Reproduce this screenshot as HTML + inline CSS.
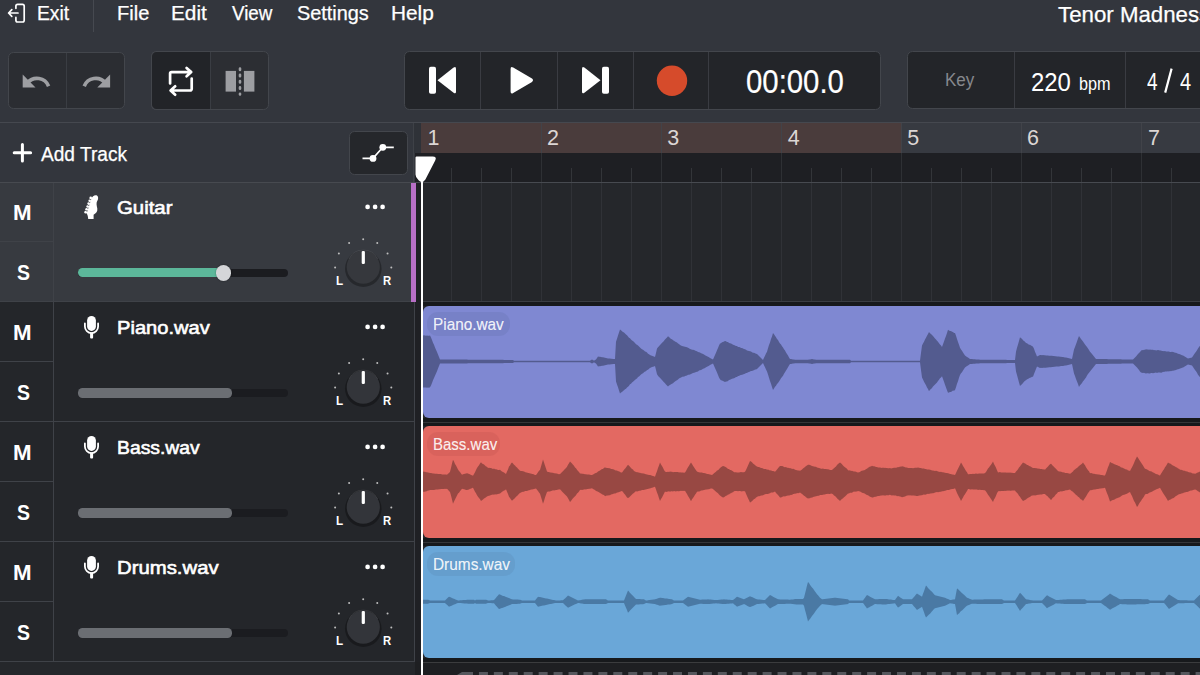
<!DOCTYPE html><html><head><meta charset="utf-8"><style>html,body{margin:0;padding:0;}body{width:1200px;height:675px;overflow:hidden;position:relative;background:#33363d;font-family:"Liberation Sans",sans-serif;}</style></head><body><svg style="position:absolute;left:0;top:0" width="40" height="30" viewBox="0 0 40 30"><path d="M15.9 8.3 V6.1 a1.7 1.7 0 0 1 1.7 -1.7 H22.5 a1.7 1.7 0 0 1 1.7 1.7 V20.3 a1.7 1.7 0 0 1 -1.7 1.7 H17.6 a1.7 1.7 0 0 1 -1.7 -1.7 V17.4" fill="none" stroke="#fff" stroke-width="1.7" stroke-linecap="round"/><path d="M18 13 H8.6 M11.8 9.7 L8.6 13 L11.8 16.3" fill="none" stroke="#fff" stroke-width="1.7" stroke-linecap="round" stroke-linejoin="round"/></svg><div style="position:absolute;left:36.96px;top:2.73px;font-size:20.40px;line-height:20.40px;font-weight:400;color:#fff;white-space:nowrap;transform:scaleX(0.9463);transform-origin:0 0;-webkit-text-stroke:0.25px #fff;">Exit</div><div style="position:absolute;left:93px;top:0px;width:1px;height:32px;background:#464950;"></div><div style="position:absolute;left:116.79px;top:2.53px;font-size:20.40px;line-height:20.40px;font-weight:400;color:#fff;white-space:nowrap;transform:scaleX(0.9837);transform-origin:0 0;-webkit-text-stroke:0.25px #fff;">File</div><div style="position:absolute;left:171.34px;top:2.53px;font-size:20.40px;line-height:20.40px;font-weight:400;color:#fff;white-space:nowrap;transform:scaleX(1.0194);transform-origin:0 0;-webkit-text-stroke:0.25px #fff;">Edit</div><div style="position:absolute;left:231.61px;top:2.53px;font-size:20.40px;line-height:20.40px;font-weight:400;color:#fff;white-space:nowrap;transform:scaleX(0.9210);transform-origin:0 0;-webkit-text-stroke:0.25px #fff;">View</div><div style="position:absolute;left:296.61px;top:2.53px;font-size:20.40px;line-height:20.40px;font-weight:400;color:#fff;white-space:nowrap;transform:scaleX(0.9735);transform-origin:0 0;-webkit-text-stroke:0.25px #fff;">Settings</div><div style="position:absolute;left:390.93px;top:2.53px;font-size:20.40px;line-height:20.40px;font-weight:400;color:#fff;white-space:nowrap;transform:scaleX(1.0209);transform-origin:0 0;-webkit-text-stroke:0.25px #fff;">Help</div><div style="position:absolute;left:1058.25px;top:3.40px;font-size:22.80px;line-height:22.80px;font-weight:400;color:#fff;white-space:nowrap;transform:scaleX(0.9768);transform-origin:0 0;-webkit-text-stroke:0.25px #fff;">Tenor Madness</div><div style="position:absolute;left:8px;top:52px;width:117px;height:57px;background:#2b2d32;border:1.5px solid #43464c;border-radius:5.5px;box-sizing:border-box;overflow:hidden"></div><div style="position:absolute;left:66px;top:53px;width:1px;height:55px;background:#3a3d43;"></div><svg style="position:absolute;left:0;top:40" width="140" height="70" viewBox="0 40 140 70"><path d="M27.5 82.8 A12.5 12.5 0 0 1 48.6 86.2" fill="none" stroke="#9d9ea2" stroke-width="3.6" stroke-linecap="butt"/><path d="M22.7 74.6 L22.7 87.4 L35.5 87.4 Z" fill="#9d9ea2"/><path d="M105.3 82.8 A12.5 12.5 0 0 0 84.2 86.2" fill="none" stroke="#9d9ea2" stroke-width="3.6" stroke-linecap="butt"/><path d="M110.1 74.6 L110.1 87.4 L97.3 87.4 Z" fill="#9d9ea2"/></svg><div style="position:absolute;left:151px;top:51px;width:118px;height:59px;background:#2c2e33;border:1.5px solid #43464c;border-radius:5.5px;box-sizing:border-box;overflow:hidden"></div><div style="position:absolute;left:151px;top:51px;width:60px;height:59px;background:#222428;border:1.5px solid #43464c;border-right:none;border-radius:5.5px 0 0 5.5px;box-sizing:border-box"></div><div style="position:absolute;left:210px;top:52px;width:1px;height:57px;background:#3a3d43;"></div><svg style="position:absolute;left:140;top:40px;left:140px" width="140" height="80" viewBox="140 40 140 80"><path d="M170.1 83.4 V73.6 a1.5 1.5 0 0 1 1.5 -1.5 H191 M186.6 67.9 L191.2 72.1 L186.6 76.3" fill="none" stroke="#fff" stroke-width="2.7" stroke-linecap="round" stroke-linejoin="round"/><path d="M191.7 78.6 V89 a1.5 1.5 0 0 1 -1.5 1.5 H170.8 M175.2 86.3 L170.6 90.5 L175.2 94.7" fill="none" stroke="#fff" stroke-width="2.7" stroke-linecap="round" stroke-linejoin="round"/><rect x="225.6" y="70.9" width="10.4" height="20.7" fill="#9d9ea2"/><rect x="243.9" y="70.9" width="10.5" height="20.7" fill="#9d9ea2"/><path d="M240 68.5 V94.5" stroke="#9d9ea2" stroke-width="2.6" stroke-dasharray="1.4 4.9" stroke-linecap="round"/></svg><div style="position:absolute;left:404px;top:51px;width:477px;height:59px;background:#232529;border:1.5px solid #43464c;border-radius:5.5px;box-sizing:border-box;overflow:hidden"></div><div style="position:absolute;left:480px;top:52px;width:1px;height:57px;background:#3a3c42;"></div><div style="position:absolute;left:557px;top:52px;width:1px;height:57px;background:#3a3c42;"></div><div style="position:absolute;left:633px;top:52px;width:1px;height:57px;background:#3a3c42;"></div><div style="position:absolute;left:708px;top:52px;width:1px;height:57px;background:#3a3c42;"></div><svg style="position:absolute;left:400px;top:40px" width="300" height="80" viewBox="400 40 300 80"><rect x="429" y="66.7" width="7" height="27" rx="1.8" fill="#fff"/><path d="M437.5 80.2 L453.6 67.6 Q456 66 456 69 V91.5 Q456 94.4 453.6 92.8 Z" fill="#fff"/><path d="M510.6 69 Q510.6 66 513.2 67.6 L532 78.6 Q534 80.3 532 82 L513.2 93.1 Q510.6 94.6 510.6 91.6 Z" fill="#fff"/><path d="M600.5 80.2 L584.4 67.6 Q582 66 582 69 V91.5 Q582 94.4 584.4 92.8 Z" fill="#fff"/><rect x="602" y="66.7" width="7" height="27" rx="1.8" fill="#fff"/><circle cx="672" cy="80.8" r="15.2" fill="#d64b2b"/></svg><div style="position:absolute;left:746.13px;top:65.36px;font-size:33.60px;line-height:33.60px;font-weight:400;color:#fff;white-space:nowrap;transform:scaleX(0.8737);transform-origin:0 0;-webkit-text-stroke:0.2px #fff;">00:00.0</div><div style="position:absolute;left:907px;top:51px;width:320px;height:58px;background:#232529;border:1.5px solid #43464c;border-radius:5.5px;box-sizing:border-box;overflow:hidden"></div><div style="position:absolute;left:1014px;top:52px;width:1px;height:56px;background:#3a3c42;"></div><div style="position:absolute;left:1125px;top:52px;width:1px;height:56px;background:#3a3c42;"></div><div style="position:absolute;left:945.44px;top:70.89px;font-size:18.80px;line-height:18.80px;font-weight:400;color:#86888d;white-space:nowrap;transform:scaleX(0.9054);transform-origin:0 0;">Key</div><div style="position:absolute;left:1030.50px;top:68.78px;font-size:26.60px;line-height:26.60px;font-weight:400;color:#fff;white-space:nowrap;transform:scaleX(0.8994);transform-origin:0 0;">220</div><div style="position:absolute;left:1078.94px;top:75.85px;font-size:17.60px;line-height:17.60px;font-weight:400;color:#fff;white-space:nowrap;transform:scaleX(0.9235);transform-origin:0 0;">bpm</div><div style="position:absolute;left:1146.52px;top:69.93px;font-size:24.30px;line-height:24.30px;font-weight:400;color:#fff;white-space:nowrap;transform:scaleX(0.7823);transform-origin:0 0;">4</div><div style="position:absolute;left:1179.60px;top:69.93px;font-size:24.30px;line-height:24.30px;font-weight:400;color:#fff;white-space:nowrap;transform:scaleX(0.8230);transform-origin:0 0;">4</div><svg style="position:absolute;left:1155px;top:62px" width="20" height="36" viewBox="1155 62 20 36"><path d="M1165.2 92.6 L1171.6 68.6" stroke="#fff" stroke-width="2.2"/></svg><div style="position:absolute;left:0px;top:122px;width:1200px;height:1px;background:#45484f;"></div><svg style="position:absolute;left:0;top:130px" width="40" height="40" viewBox="0 130 40 40"><path d="M22.4 144.5 V161 M14.2 152.8 H30.6" stroke="#fff" stroke-width="3" stroke-linecap="round"/></svg><div style="position:absolute;left:40.60px;top:143.99px;font-size:20.10px;line-height:20.10px;font-weight:400;color:#fff;white-space:nowrap;transform:scaleX(0.9508);transform-origin:0 0;-webkit-text-stroke:0.25px #fff;">Add Track</div><div style="position:absolute;left:349px;top:131px;width:59px;height:44px;background:#25272b;border:1.5px solid #43464c;border-radius:5.5px;box-sizing:border-box"></div><svg style="position:absolute;left:350px;top:135px" width="60" height="40" viewBox="350 135 60 40"><path d="M362.5 158.4 H373 L382.8 147.3 H393.8" fill="none" stroke="#fff" stroke-width="1.7"/><circle cx="373" cy="158.4" r="3.4" fill="#fff"/><circle cx="382.8" cy="147.3" r="3.4" fill="#fff"/></svg><div style="position:absolute;left:421px;top:123px;width:779px;height:30px;background:#373a41;"></div><div style="position:absolute;left:421px;top:123px;width:481px;height:30px;background:#4a3c3c;"></div><div style="position:absolute;left:414px;top:123px;width:7px;height:30px;background:#2f3238;"></div><div style="position:absolute;left:413px;top:123px;width:1px;height:59px;background:#3e4147;"></div><div style="position:absolute;left:415px;top:153px;width:785px;height:29px;background:#1e1f23;"></div><svg style="position:absolute;left:0;top:0" width="1200" height="675"><line x1="451.5" y1="168" x2="451.5" y2="182" stroke="#333539" stroke-width="1"/><line x1="481.5" y1="168" x2="481.5" y2="182" stroke="#333539" stroke-width="1"/><line x1="511.5" y1="168" x2="511.5" y2="182" stroke="#333539" stroke-width="1"/><line x1="541.5" y1="123" x2="541.5" y2="153" stroke="#414349" stroke-width="1"/><line x1="541.5" y1="153" x2="541.5" y2="182" stroke="#2e3034" stroke-width="1"/><line x1="571.5" y1="168" x2="571.5" y2="182" stroke="#333539" stroke-width="1"/><line x1="601.5" y1="168" x2="601.5" y2="182" stroke="#333539" stroke-width="1"/><line x1="631.5" y1="168" x2="631.5" y2="182" stroke="#333539" stroke-width="1"/><line x1="661.5" y1="123" x2="661.5" y2="153" stroke="#414349" stroke-width="1"/><line x1="661.5" y1="153" x2="661.5" y2="182" stroke="#2e3034" stroke-width="1"/><line x1="691.5" y1="168" x2="691.5" y2="182" stroke="#333539" stroke-width="1"/><line x1="721.5" y1="168" x2="721.5" y2="182" stroke="#333539" stroke-width="1"/><line x1="751.5" y1="168" x2="751.5" y2="182" stroke="#333539" stroke-width="1"/><line x1="781.5" y1="123" x2="781.5" y2="153" stroke="#414349" stroke-width="1"/><line x1="781.5" y1="153" x2="781.5" y2="182" stroke="#2e3034" stroke-width="1"/><line x1="811.5" y1="168" x2="811.5" y2="182" stroke="#333539" stroke-width="1"/><line x1="841.5" y1="168" x2="841.5" y2="182" stroke="#333539" stroke-width="1"/><line x1="871.5" y1="168" x2="871.5" y2="182" stroke="#333539" stroke-width="1"/><line x1="901.5" y1="123" x2="901.5" y2="153" stroke="#414349" stroke-width="1"/><line x1="901.5" y1="153" x2="901.5" y2="182" stroke="#2e3034" stroke-width="1"/><line x1="931.5" y1="168" x2="931.5" y2="182" stroke="#333539" stroke-width="1"/><line x1="961.5" y1="168" x2="961.5" y2="182" stroke="#333539" stroke-width="1"/><line x1="991.5" y1="168" x2="991.5" y2="182" stroke="#333539" stroke-width="1"/><line x1="1021.5" y1="123" x2="1021.5" y2="153" stroke="#414349" stroke-width="1"/><line x1="1021.5" y1="153" x2="1021.5" y2="182" stroke="#2e3034" stroke-width="1"/><line x1="1051.5" y1="168" x2="1051.5" y2="182" stroke="#333539" stroke-width="1"/><line x1="1081.5" y1="168" x2="1081.5" y2="182" stroke="#333539" stroke-width="1"/><line x1="1111.5" y1="168" x2="1111.5" y2="182" stroke="#333539" stroke-width="1"/><line x1="1141.5" y1="123" x2="1141.5" y2="153" stroke="#414349" stroke-width="1"/><line x1="1141.5" y1="153" x2="1141.5" y2="182" stroke="#2e3034" stroke-width="1"/><line x1="1171.5" y1="168" x2="1171.5" y2="182" stroke="#333539" stroke-width="1"/><line x1="1201.5" y1="168" x2="1201.5" y2="182" stroke="#333539" stroke-width="1"/></svg><div style="position:absolute;left:427.39px;top:128.20px;font-size:21.50px;line-height:21.50px;font-weight:400;color:#dcd6d4;white-space:nowrap;">1</div><div style="position:absolute;left:547.12px;top:128.20px;font-size:21.50px;line-height:21.50px;font-weight:400;color:#dcd6d4;white-space:nowrap;">2</div><div style="position:absolute;left:667.34px;top:128.20px;font-size:21.50px;line-height:21.50px;font-weight:400;color:#dcd6d4;white-space:nowrap;">3</div><div style="position:absolute;left:787.77px;top:128.20px;font-size:21.50px;line-height:21.50px;font-weight:400;color:#dcd6d4;white-space:nowrap;">4</div><div style="position:absolute;left:907.34px;top:128.20px;font-size:21.50px;line-height:21.50px;font-weight:400;color:#dcd6d4;white-space:nowrap;">5</div><div style="position:absolute;left:1027.12px;top:128.20px;font-size:21.50px;line-height:21.50px;font-weight:400;color:#dcd6d4;white-space:nowrap;">6</div><div style="position:absolute;left:1147.92px;top:128.20px;font-size:21.50px;line-height:21.50px;font-weight:400;color:#dcd6d4;white-space:nowrap;">7</div><div style="position:absolute;left:421px;top:182px;width:779px;height:493px;background:#25272b;"></div><div style="position:absolute;left:415px;top:182px;width:6px;height:493px;background:#1f2024;"></div><svg style="position:absolute;left:0;top:0" width="1200" height="675"><line x1="421.5" y1="182" x2="421.5" y2="675" stroke="#303237" stroke-width="1"/><line x1="451.5" y1="182" x2="451.5" y2="675" stroke="#303237" stroke-width="1"/><line x1="481.5" y1="182" x2="481.5" y2="675" stroke="#303237" stroke-width="1"/><line x1="511.5" y1="182" x2="511.5" y2="675" stroke="#303237" stroke-width="1"/><line x1="541.5" y1="182" x2="541.5" y2="675" stroke="#303237" stroke-width="1"/><line x1="571.5" y1="182" x2="571.5" y2="675" stroke="#303237" stroke-width="1"/><line x1="601.5" y1="182" x2="601.5" y2="675" stroke="#303237" stroke-width="1"/><line x1="631.5" y1="182" x2="631.5" y2="675" stroke="#303237" stroke-width="1"/><line x1="661.5" y1="182" x2="661.5" y2="675" stroke="#303237" stroke-width="1"/><line x1="691.5" y1="182" x2="691.5" y2="675" stroke="#303237" stroke-width="1"/><line x1="721.5" y1="182" x2="721.5" y2="675" stroke="#303237" stroke-width="1"/><line x1="751.5" y1="182" x2="751.5" y2="675" stroke="#303237" stroke-width="1"/><line x1="781.5" y1="182" x2="781.5" y2="675" stroke="#303237" stroke-width="1"/><line x1="811.5" y1="182" x2="811.5" y2="675" stroke="#303237" stroke-width="1"/><line x1="841.5" y1="182" x2="841.5" y2="675" stroke="#303237" stroke-width="1"/><line x1="871.5" y1="182" x2="871.5" y2="675" stroke="#303237" stroke-width="1"/><line x1="901.5" y1="182" x2="901.5" y2="675" stroke="#303237" stroke-width="1"/><line x1="931.5" y1="182" x2="931.5" y2="675" stroke="#303237" stroke-width="1"/><line x1="961.5" y1="182" x2="961.5" y2="675" stroke="#303237" stroke-width="1"/><line x1="991.5" y1="182" x2="991.5" y2="675" stroke="#303237" stroke-width="1"/><line x1="1021.5" y1="182" x2="1021.5" y2="675" stroke="#303237" stroke-width="1"/><line x1="1051.5" y1="182" x2="1051.5" y2="675" stroke="#303237" stroke-width="1"/><line x1="1081.5" y1="182" x2="1081.5" y2="675" stroke="#303237" stroke-width="1"/><line x1="1111.5" y1="182" x2="1111.5" y2="675" stroke="#303237" stroke-width="1"/><line x1="1141.5" y1="182" x2="1141.5" y2="675" stroke="#303237" stroke-width="1"/><line x1="1171.5" y1="182" x2="1171.5" y2="675" stroke="#303237" stroke-width="1"/><line x1="1201.5" y1="182" x2="1201.5" y2="675" stroke="#303237" stroke-width="1"/></svg><div style="position:absolute;left:421px;top:301px;width:779px;height:1px;background:#3f4248;"></div><div style="position:absolute;left:421px;top:421px;width:779px;height:1px;background:#3f4248;"></div><div style="position:absolute;left:421px;top:541px;width:779px;height:1px;background:#3f4248;"></div><div style="position:absolute;left:421px;top:661px;width:779px;height:1px;background:#3f4248;"></div><div style="position:absolute;left:0px;top:182px;width:414px;height:120px;background:#373a40;"></div><div style="position:absolute;left:0px;top:241px;width:53px;height:1px;background:#3f4248;"></div><div style="position:absolute;left:53px;top:182px;width:1px;height:120px;background:#3f4248;"></div><div style="position:absolute;left:0px;top:301px;width:415px;height:1px;background:#3f4248;"></div><div style="position:absolute;left:13.45px;top:201.85px;font-size:21.80px;line-height:21.80px;font-weight:700;color:#fff;white-space:nowrap;transform:scaleX(1.0223);transform-origin:0 0;">M</div><div style="position:absolute;left:17.02px;top:261.51px;font-size:22.20px;line-height:22.20px;font-weight:700;color:#fff;white-space:nowrap;transform:scaleX(0.8784);transform-origin:0 0;">S</div><div style="position:absolute;left:117.38px;top:198.56px;font-size:18.60px;line-height:18.60px;font-weight:400;color:#fff;white-space:nowrap;transform:scaleX(1.0955);transform-origin:0 0;-webkit-text-stroke:0.6px #fff;">Guitar</div><svg style="position:absolute;left:76px;top:188px" width="28" height="36" viewBox="76 188 28 36"><path d="M91.2 199.2 C92.2 196 94.6 194.8 96.5 195.3 C98.6 196 98.6 199.3 97 201.5 C96.2 203 96.6 205.5 97.3 208.5 C97.8 211.5 96 213.2 93.6 214.8 L93.6 219 L88.2 219 C88 216.5 87.6 215 86.6 213.6 Z" fill="#fff"/><circle cx="90.70" cy="197.90" r="1.3" fill="#fff"/><path d="M90.70 197.90 L92.20 198.60" stroke="#fff" stroke-width="1"/><circle cx="89.68" cy="200.75" r="1.3" fill="#fff"/><path d="M89.68 200.75 L91.18 201.45" stroke="#fff" stroke-width="1"/><circle cx="88.66" cy="203.60" r="1.3" fill="#fff"/><path d="M88.66 203.60 L90.16 204.30" stroke="#fff" stroke-width="1"/><circle cx="87.64" cy="206.45" r="1.3" fill="#fff"/><path d="M87.64 206.45 L89.14 207.15" stroke="#fff" stroke-width="1"/><circle cx="86.62" cy="209.30" r="1.3" fill="#fff"/><path d="M86.62 209.30 L88.12 210.00" stroke="#fff" stroke-width="1"/><circle cx="85.60" cy="212.15" r="1.3" fill="#fff"/><path d="M85.60 212.15 L87.10 212.85" stroke="#fff" stroke-width="1"/></svg><svg style="position:absolute;left:360px;top:202px" width="30" height="10" viewBox="360 202 30 10"><circle cx="367.6" cy="206.9" r="2.35" fill="#fff"/><circle cx="375.1" cy="206.9" r="2.35" fill="#fff"/><circle cx="382.6" cy="206.9" r="2.35" fill="#fff"/></svg><div style="position:absolute;left:78px;top:268.5px;width:210px;height:8.5px;background:#1b1c20;border-radius:4.25px;"></div><div style="position:absolute;left:78px;top:268.3px;width:146px;height:9px;background:#5cb79a;border-radius:4.5px;"></div><div style="position:absolute;left:215.7px;top:265.2px;width:15.5px;height:15.5px;border-radius:50%;background:#d5d6d9;box-shadow:0 0 2px rgba(0,0,0,.4)"></div><svg style="position:absolute;left:320px;top:227px" width="80" height="70" viewBox="320 227 80 70"><circle cx="363.3" cy="268.70000000000005" r="18.3" fill="rgba(0,0,0,0.3)"/><circle cx="363.3" cy="267.1" r="16.6" fill="#36383d"/><path d="M348.8 259.1 A16.2 16.2 0 0 1 377.8 259.1" fill="none" stroke="rgba(255,255,255,0.09)" stroke-width="0.9"/><rect x="361.7" y="250.90000000000003" width="3.2" height="13" rx="1.2" fill="#fff"/><circle cx="335.10" cy="267.60" r="1.0" fill="#bdbdbd"/><circle cx="338.86" cy="253.40" r="1.0" fill="#bdbdbd"/><circle cx="349.15" cy="243.00" r="1.0" fill="#bdbdbd"/><circle cx="363.20" cy="239.20" r="1.0" fill="#bdbdbd"/><circle cx="377.25" cy="243.00" r="1.0" fill="#bdbdbd"/><circle cx="387.54" cy="253.40" r="1.0" fill="#bdbdbd"/><circle cx="391.30" cy="267.60" r="1.0" fill="#bdbdbd"/></svg><div style="position:absolute;left:336.14px;top:274.73px;font-size:12.60px;line-height:12.60px;font-weight:700;color:#fff;white-space:nowrap;transform:scaleX(0.9246);transform-origin:0 0;">L</div><div style="position:absolute;left:383.26px;top:274.73px;font-size:12.60px;line-height:12.60px;font-weight:700;color:#fff;white-space:nowrap;transform:scaleX(0.8999);transform-origin:0 0;">R</div><div style="position:absolute;left:0px;top:302px;width:414px;height:120px;background:#24262a;"></div><div style="position:absolute;left:0px;top:361px;width:53px;height:1px;background:#3f4248;"></div><div style="position:absolute;left:53px;top:302px;width:1px;height:120px;background:#3f4248;"></div><div style="position:absolute;left:0px;top:421px;width:415px;height:1px;background:#3f4248;"></div><div style="position:absolute;left:13.45px;top:321.85px;font-size:21.80px;line-height:21.80px;font-weight:700;color:#fff;white-space:nowrap;transform:scaleX(1.0223);transform-origin:0 0;">M</div><div style="position:absolute;left:17.02px;top:381.51px;font-size:22.20px;line-height:22.20px;font-weight:700;color:#fff;white-space:nowrap;transform:scaleX(0.8784);transform-origin:0 0;">S</div><div style="position:absolute;left:116.79px;top:318.56px;font-size:18.60px;line-height:18.60px;font-weight:400;color:#fff;white-space:nowrap;transform:scaleX(1.0812);transform-origin:0 0;-webkit-text-stroke:0.6px #fff;">Piano.wav</div><svg style="position:absolute;left:76px;top:310px" width="28" height="36" viewBox="76 310 28 36"><rect x="87.1" y="316.0" width="8.8" height="14.9" rx="4.4" fill="#fff"/><path d="M84.9 323.5 V326.5 A6.6 6.6 0 0 0 98.1 326.5 V323.5" fill="none" stroke="#fff" stroke-width="1.8" stroke-linecap="round"/><rect x="90.1" y="332.5" width="3" height="6" rx="1" fill="#fff"/></svg><svg style="position:absolute;left:360px;top:322px" width="30" height="10" viewBox="360 322 30 10"><circle cx="367.6" cy="326.9" r="2.35" fill="#fff"/><circle cx="375.1" cy="326.9" r="2.35" fill="#fff"/><circle cx="382.6" cy="326.9" r="2.35" fill="#fff"/></svg><div style="position:absolute;left:78px;top:388.5px;width:210px;height:8.5px;background:#1b1c20;border-radius:4.25px;"></div><div style="position:absolute;left:77.6px;top:388.4px;width:154.8px;height:9.2px;background:#6b6e73;border-radius:4.6px;"></div><svg style="position:absolute;left:320px;top:347px" width="80" height="70" viewBox="320 347 80 70"><circle cx="363.3" cy="388.70000000000005" r="18.3" fill="rgba(0,0,0,0.3)"/><circle cx="363.3" cy="387.1" r="16.6" fill="#33353a"/><path d="M348.8 379.1 A16.2 16.2 0 0 1 377.8 379.1" fill="none" stroke="rgba(255,255,255,0.09)" stroke-width="0.9"/><rect x="361.7" y="370.90000000000003" width="3.2" height="13" rx="1.2" fill="#fff"/><circle cx="335.10" cy="387.60" r="1.0" fill="#bdbdbd"/><circle cx="338.86" cy="373.40" r="1.0" fill="#bdbdbd"/><circle cx="349.15" cy="363.00" r="1.0" fill="#bdbdbd"/><circle cx="363.20" cy="359.20" r="1.0" fill="#bdbdbd"/><circle cx="377.25" cy="363.00" r="1.0" fill="#bdbdbd"/><circle cx="387.54" cy="373.40" r="1.0" fill="#bdbdbd"/><circle cx="391.30" cy="387.60" r="1.0" fill="#bdbdbd"/></svg><div style="position:absolute;left:336.14px;top:394.73px;font-size:12.60px;line-height:12.60px;font-weight:700;color:#fff;white-space:nowrap;transform:scaleX(0.9246);transform-origin:0 0;">L</div><div style="position:absolute;left:383.26px;top:394.73px;font-size:12.60px;line-height:12.60px;font-weight:700;color:#fff;white-space:nowrap;transform:scaleX(0.8999);transform-origin:0 0;">R</div><div style="position:absolute;left:0px;top:422px;width:414px;height:120px;background:#24262a;"></div><div style="position:absolute;left:0px;top:481px;width:53px;height:1px;background:#3f4248;"></div><div style="position:absolute;left:53px;top:422px;width:1px;height:120px;background:#3f4248;"></div><div style="position:absolute;left:0px;top:541px;width:415px;height:1px;background:#3f4248;"></div><div style="position:absolute;left:13.45px;top:441.85px;font-size:21.80px;line-height:21.80px;font-weight:700;color:#fff;white-space:nowrap;transform:scaleX(1.0223);transform-origin:0 0;">M</div><div style="position:absolute;left:17.02px;top:501.51px;font-size:22.20px;line-height:22.20px;font-weight:700;color:#fff;white-space:nowrap;transform:scaleX(0.8784);transform-origin:0 0;">S</div><div style="position:absolute;left:116.85px;top:438.56px;font-size:18.60px;line-height:18.60px;font-weight:400;color:#fff;white-space:nowrap;transform:scaleX(1.0394);transform-origin:0 0;-webkit-text-stroke:0.6px #fff;">Bass.wav</div><svg style="position:absolute;left:76px;top:430px" width="28" height="36" viewBox="76 430 28 36"><rect x="87.1" y="436.0" width="8.8" height="14.9" rx="4.4" fill="#fff"/><path d="M84.9 443.5 V446.5 A6.6 6.6 0 0 0 98.1 446.5 V443.5" fill="none" stroke="#fff" stroke-width="1.8" stroke-linecap="round"/><rect x="90.1" y="452.5" width="3" height="6" rx="1" fill="#fff"/></svg><svg style="position:absolute;left:360px;top:442px" width="30" height="10" viewBox="360 442 30 10"><circle cx="367.6" cy="446.9" r="2.35" fill="#fff"/><circle cx="375.1" cy="446.9" r="2.35" fill="#fff"/><circle cx="382.6" cy="446.9" r="2.35" fill="#fff"/></svg><div style="position:absolute;left:78px;top:508.5px;width:210px;height:8.5px;background:#1b1c20;border-radius:4.25px;"></div><div style="position:absolute;left:77.6px;top:508.4px;width:154.8px;height:9.2px;background:#6b6e73;border-radius:4.6px;"></div><svg style="position:absolute;left:320px;top:467px" width="80" height="70" viewBox="320 467 80 70"><circle cx="363.3" cy="508.70000000000005" r="18.3" fill="rgba(0,0,0,0.3)"/><circle cx="363.3" cy="507.1" r="16.6" fill="#33353a"/><path d="M348.8 499.1 A16.2 16.2 0 0 1 377.8 499.1" fill="none" stroke="rgba(255,255,255,0.09)" stroke-width="0.9"/><rect x="361.7" y="490.90000000000003" width="3.2" height="13" rx="1.2" fill="#fff"/><circle cx="335.10" cy="507.60" r="1.0" fill="#bdbdbd"/><circle cx="338.86" cy="493.40" r="1.0" fill="#bdbdbd"/><circle cx="349.15" cy="483.00" r="1.0" fill="#bdbdbd"/><circle cx="363.20" cy="479.20" r="1.0" fill="#bdbdbd"/><circle cx="377.25" cy="483.00" r="1.0" fill="#bdbdbd"/><circle cx="387.54" cy="493.40" r="1.0" fill="#bdbdbd"/><circle cx="391.30" cy="507.60" r="1.0" fill="#bdbdbd"/></svg><div style="position:absolute;left:336.14px;top:514.73px;font-size:12.60px;line-height:12.60px;font-weight:700;color:#fff;white-space:nowrap;transform:scaleX(0.9246);transform-origin:0 0;">L</div><div style="position:absolute;left:383.26px;top:514.73px;font-size:12.60px;line-height:12.60px;font-weight:700;color:#fff;white-space:nowrap;transform:scaleX(0.8999);transform-origin:0 0;">R</div><div style="position:absolute;left:0px;top:542px;width:414px;height:120px;background:#24262a;"></div><div style="position:absolute;left:0px;top:601px;width:53px;height:1px;background:#3f4248;"></div><div style="position:absolute;left:53px;top:542px;width:1px;height:120px;background:#3f4248;"></div><div style="position:absolute;left:0px;top:661px;width:415px;height:1px;background:#3f4248;"></div><div style="position:absolute;left:13.45px;top:561.85px;font-size:21.80px;line-height:21.80px;font-weight:700;color:#fff;white-space:nowrap;transform:scaleX(1.0223);transform-origin:0 0;">M</div><div style="position:absolute;left:17.02px;top:621.51px;font-size:22.20px;line-height:22.20px;font-weight:700;color:#fff;white-space:nowrap;transform:scaleX(0.8784);transform-origin:0 0;">S</div><div style="position:absolute;left:116.77px;top:558.56px;font-size:18.60px;line-height:18.60px;font-weight:400;color:#fff;white-space:nowrap;transform:scaleX(1.0928);transform-origin:0 0;-webkit-text-stroke:0.6px #fff;">Drums.wav</div><svg style="position:absolute;left:76px;top:550px" width="28" height="36" viewBox="76 550 28 36"><rect x="87.1" y="556.0" width="8.8" height="14.9" rx="4.4" fill="#fff"/><path d="M84.9 563.5 V566.5 A6.6 6.6 0 0 0 98.1 566.5 V563.5" fill="none" stroke="#fff" stroke-width="1.8" stroke-linecap="round"/><rect x="90.1" y="572.5" width="3" height="6" rx="1" fill="#fff"/></svg><svg style="position:absolute;left:360px;top:562px" width="30" height="10" viewBox="360 562 30 10"><circle cx="367.6" cy="566.9" r="2.35" fill="#fff"/><circle cx="375.1" cy="566.9" r="2.35" fill="#fff"/><circle cx="382.6" cy="566.9" r="2.35" fill="#fff"/></svg><div style="position:absolute;left:78px;top:628.5px;width:210px;height:8.5px;background:#1b1c20;border-radius:4.25px;"></div><div style="position:absolute;left:77.6px;top:628.4px;width:154.8px;height:9.2px;background:#6b6e73;border-radius:4.6px;"></div><svg style="position:absolute;left:320px;top:587px" width="80" height="70" viewBox="320 587 80 70"><circle cx="363.3" cy="628.7" r="18.3" fill="rgba(0,0,0,0.3)"/><circle cx="363.3" cy="627.1" r="16.6" fill="#33353a"/><path d="M348.8 619.1 A16.2 16.2 0 0 1 377.8 619.1" fill="none" stroke="rgba(255,255,255,0.09)" stroke-width="0.9"/><rect x="361.7" y="610.9" width="3.2" height="13" rx="1.2" fill="#fff"/><circle cx="335.10" cy="627.60" r="1.0" fill="#bdbdbd"/><circle cx="338.86" cy="613.40" r="1.0" fill="#bdbdbd"/><circle cx="349.15" cy="603.00" r="1.0" fill="#bdbdbd"/><circle cx="363.20" cy="599.20" r="1.0" fill="#bdbdbd"/><circle cx="377.25" cy="603.00" r="1.0" fill="#bdbdbd"/><circle cx="387.54" cy="613.40" r="1.0" fill="#bdbdbd"/><circle cx="391.30" cy="627.60" r="1.0" fill="#bdbdbd"/></svg><div style="position:absolute;left:336.14px;top:634.73px;font-size:12.60px;line-height:12.60px;font-weight:700;color:#fff;white-space:nowrap;transform:scaleX(0.9246);transform-origin:0 0;">L</div><div style="position:absolute;left:383.26px;top:634.73px;font-size:12.60px;line-height:12.60px;font-weight:700;color:#fff;white-space:nowrap;transform:scaleX(0.8999);transform-origin:0 0;">R</div><div style="position:absolute;left:414px;top:182px;width:1px;height:480px;background:#3f4248;"></div><div style="position:absolute;left:411px;top:183px;width:4.5px;height:118.5px;background:#b86fc6;"></div><div style="position:absolute;left:0px;top:181.5px;width:1200px;height:1.3px;background:#474a50;"></div><div style="position:absolute;left:0px;top:662px;width:415px;height:13px;background:#25272b;"></div><div style="position:absolute;left:415px;top:662px;width:785px;height:13px;background:#1e1f22;"></div><div style="position:absolute;left:421px;top:302px;width:779px;height:4px;background:#17191c;"></div><div style="position:absolute;left:421px;top:418px;width:779px;height:8px;background:#17191c;"></div><div style="position:absolute;left:421px;top:538px;width:779px;height:8px;background:#17191c;"></div><div style="position:absolute;left:421px;top:658px;width:779px;height:4px;background:#17191c;"></div><div style="position:absolute;left:421px;top:421.5px;width:779px;height:1px;background:rgba(255,255,255,0.13);"></div><div style="position:absolute;left:421px;top:541.5px;width:779px;height:1px;background:rgba(255,255,255,0.13);"></div><div style="position:absolute;left:421px;top:661.5px;width:779px;height:1px;background:rgba(255,255,255,0.13);"></div><div style="position:absolute;left:421px;top:301px;width:779px;height:1px;background:#3a3d43;"></div><div style="position:absolute;left:423px;top:306px;width:790px;height:112px;background:#7f88d2;border-radius:6px;overflow:hidden"><svg style="position:absolute;left:-423px;top:-306px" width="1213" height="675"><path d="M423.0 335.5 L424.0 335.2 L425.0 335.5 L426.0 335.7 L427.0 335.4 L428.0 335.7 L429.0 335.7 L430.0 335.4 L431.0 337.5 L432.0 340.1 L433.0 342.7 L434.0 344.8 L435.0 347.4 L436.0 349.8 L437.0 352.0 L438.0 354.5 L439.0 357.0 L440.0 359.5 L441.0 359.5 L442.0 359.5 L443.0 359.5 L444.0 359.5 L445.0 359.5 L446.0 359.5 L447.0 359.5 L448.0 359.5 L449.0 359.5 L450.0 359.6 L451.0 359.6 L452.0 359.6 L453.0 359.6 L454.0 359.6 L455.0 359.6 L456.0 359.6 L457.0 359.6 L458.0 359.6 L459.0 359.6 L460.0 359.6 L461.0 359.6 L462.0 359.6 L463.0 359.6 L464.0 359.6 L465.0 359.6 L466.0 359.6 L467.0 359.6 L468.0 359.7 L469.0 359.7 L470.0 359.7 L471.0 359.7 L472.0 359.7 L473.0 359.7 L474.0 359.7 L475.0 359.7 L476.0 359.7 L477.0 359.7 L478.0 359.7 L479.0 359.7 L480.0 359.7 L481.0 359.7 L482.0 359.7 L483.0 359.7 L484.0 359.7 L485.0 359.7 L486.0 359.8 L487.0 359.8 L488.0 359.8 L489.0 359.8 L490.0 359.8 L491.0 359.8 L492.0 359.8 L493.0 359.8 L494.0 359.8 L495.0 359.8 L496.0 359.8 L497.0 359.8 L498.0 359.8 L499.0 359.8 L500.0 359.8 L501.0 359.8 L502.0 359.8 L503.0 359.8 L504.0 359.9 L505.0 359.9 L506.0 359.9 L507.0 359.9 L508.0 359.9 L509.0 359.9 L510.0 359.9 L511.0 359.9 L512.0 359.9 L513.0 359.9 L514.0 360.7 L515.0 360.7 L516.0 360.7 L517.0 360.7 L518.0 360.7 L519.0 360.7 L520.0 360.7 L521.0 360.7 L522.0 360.7 L523.0 360.7 L524.0 360.7 L525.0 360.7 L526.0 360.7 L527.0 360.7 L528.0 360.7 L529.0 360.7 L530.0 360.7 L531.0 360.7 L532.0 360.7 L533.0 360.7 L534.0 360.7 L535.0 360.7 L536.0 360.7 L537.0 360.7 L538.0 360.7 L539.0 360.7 L540.0 360.7 L541.0 360.7 L542.0 360.7 L543.0 360.7 L544.0 360.7 L545.0 360.7 L546.0 360.7 L547.0 360.7 L548.0 360.7 L549.0 360.7 L550.0 360.7 L551.0 360.7 L552.0 360.7 L553.0 360.7 L554.0 360.7 L555.0 360.7 L556.0 360.7 L557.0 360.7 L558.0 360.7 L559.0 360.7 L560.0 360.7 L561.0 360.7 L562.0 360.7 L563.0 360.7 L564.0 360.7 L565.0 360.7 L566.0 360.7 L567.0 360.7 L568.0 360.7 L569.0 360.7 L570.0 360.7 L571.0 360.7 L572.0 360.7 L573.0 360.7 L574.0 360.7 L575.0 360.7 L576.0 360.7 L577.0 360.7 L578.0 360.7 L579.0 360.7 L580.0 360.7 L581.0 360.7 L582.0 360.7 L583.0 360.7 L584.0 360.7 L585.0 360.7 L586.0 360.7 L587.0 360.7 L588.0 360.7 L589.0 360.7 L590.0 360.7 L591.0 360.1 L592.0 359.5 L593.0 360.1 L594.0 360.7 L595.0 360.1 L596.0 359.5 L597.0 358.0 L598.0 356.5 L599.0 356.7 L600.0 356.8 L601.0 357.0 L602.0 357.2 L603.0 357.3 L604.0 357.5 L605.0 357.8 L606.0 358.0 L607.0 358.2 L608.0 358.5 L609.0 358.6 L610.0 358.6 L611.0 358.7 L612.0 358.8 L613.0 358.9 L614.0 358.9 L615.0 359.0 L616.0 341.7 L617.0 338.7 L618.0 335.6 L619.0 332.5 L620.0 329.6 L621.0 330.3 L622.0 331.3 L623.0 331.9 L624.0 332.6 L625.0 333.5 L626.0 334.4 L627.0 335.3 L628.0 336.6 L629.0 337.7 L630.0 338.3 L631.0 339.6 L632.0 340.4 L633.0 341.0 L634.0 341.9 L635.0 343.1 L636.0 344.2 L637.0 344.7 L638.0 345.4 L639.0 346.6 L640.0 347.5 L641.0 348.4 L642.0 349.2 L643.0 349.7 L644.0 350.5 L645.0 351.4 L646.0 351.8 L647.0 352.5 L648.0 353.7 L649.0 354.3 L650.0 355.0 L651.0 355.4 L652.0 355.8 L653.0 356.2 L654.0 356.6 L655.0 357.0 L656.0 352.9 L657.0 348.5 L658.0 347.2 L659.0 346.2 L660.0 345.1 L661.0 344.1 L662.0 342.8 L663.0 342.1 L664.0 340.7 L665.0 339.6 L666.0 338.4 L667.0 337.5 L668.0 336.3 L669.0 337.1 L670.0 338.0 L671.0 338.9 L672.0 339.3 L673.0 340.2 L674.0 340.7 L675.0 341.4 L676.0 342.1 L677.0 342.6 L678.0 343.5 L679.0 344.0 L680.0 344.9 L681.0 345.5 L682.0 346.0 L683.0 346.2 L684.0 346.6 L685.0 346.8 L686.0 347.0 L687.0 347.3 L688.0 347.8 L689.0 348.3 L690.0 349.0 L691.0 349.3 L692.0 349.7 L693.0 349.8 L694.0 350.0 L695.0 350.6 L696.0 351.1 L697.0 351.3 L698.0 351.9 L699.0 352.2 L700.0 352.6 L701.0 353.2 L702.0 353.6 L703.0 354.0 L704.0 354.5 L705.0 355.3 L706.0 355.7 L707.0 356.2 L708.0 356.8 L709.0 357.3 L710.0 357.9 L711.0 358.4 L712.0 359.0 L713.0 359.5 L714.0 357.2 L715.0 354.9 L716.0 352.7 L717.0 350.3 L718.0 347.9 L719.0 345.5 L720.0 343.4 L721.0 343.2 L722.0 342.3 L723.0 342.1 L724.0 341.4 L725.0 340.9 L726.0 341.3 L727.0 342.0 L728.0 342.1 L729.0 343.0 L730.0 343.3 L731.0 343.5 L732.0 344.0 L733.0 344.7 L734.0 344.9 L735.0 345.4 L736.0 345.9 L737.0 346.1 L738.0 346.9 L739.0 346.9 L740.0 347.3 L741.0 347.9 L742.0 348.1 L743.0 348.6 L744.0 349.1 L745.0 349.3 L746.0 349.8 L747.0 350.4 L748.0 350.8 L749.0 350.9 L750.0 351.2 L751.0 351.5 L752.0 352.2 L753.0 352.7 L754.0 352.7 L755.0 353.3 L756.0 353.7 L757.0 354.0 L758.0 354.9 L759.0 355.9 L760.0 356.9 L761.0 357.9 L762.0 358.9 L763.0 359.9 L764.0 357.8 L765.0 355.7 L766.0 353.6 L767.0 351.7 L768.0 348.2 L769.0 345.1 L770.0 342.4 L771.0 338.9 L772.0 336.4 L773.0 333.0 L774.0 334.2 L775.0 335.7 L776.0 337.3 L777.0 339.0 L778.0 340.1 L779.0 341.9 L780.0 343.4 L781.0 344.5 L782.0 346.2 L783.0 347.5 L784.0 349.2 L785.0 350.5 L786.0 352.4 L787.0 354.0 L788.0 355.6 L789.0 357.4 L790.0 359.0 L791.0 359.1 L792.0 359.3 L793.0 359.4 L794.0 359.6 L795.0 359.7 L796.0 359.7 L797.0 359.7 L798.0 359.7 L799.0 359.7 L800.0 359.7 L801.0 359.7 L802.0 359.7 L803.0 359.7 L804.0 359.7 L805.0 359.7 L806.0 359.7 L807.0 359.7 L808.0 359.7 L809.0 359.5 L810.0 359.4 L811.0 359.2 L812.0 359.0 L813.0 359.2 L814.0 359.4 L815.0 359.5 L816.0 359.7 L817.0 359.7 L818.0 359.7 L819.0 359.7 L820.0 359.7 L821.0 359.7 L822.0 359.7 L823.0 359.7 L824.0 359.7 L825.0 359.7 L826.0 359.7 L827.0 359.7 L828.0 359.7 L829.0 359.7 L830.0 359.7 L831.0 359.7 L832.0 359.7 L833.0 359.7 L834.0 359.7 L835.0 359.7 L836.0 359.7 L837.0 359.7 L838.0 359.7 L839.0 359.7 L840.0 359.7 L841.0 359.7 L842.0 359.7 L843.0 359.7 L844.0 359.7 L845.0 359.7 L846.0 359.7 L847.0 359.7 L848.0 359.7 L849.0 359.7 L850.0 359.7 L851.0 360.7 L852.0 360.7 L853.0 360.7 L854.0 360.7 L855.0 360.7 L856.0 360.7 L857.0 360.7 L858.0 360.7 L859.0 360.7 L860.0 360.7 L861.0 360.7 L862.0 360.7 L863.0 360.7 L864.0 360.7 L865.0 360.7 L866.0 360.7 L867.0 360.7 L868.0 360.7 L869.0 360.7 L870.0 360.7 L871.0 360.7 L872.0 360.7 L873.0 360.7 L874.0 360.7 L875.0 360.7 L876.0 360.7 L877.0 360.7 L878.0 360.7 L879.0 360.7 L880.0 360.7 L881.0 360.7 L882.0 360.7 L883.0 360.7 L884.0 360.7 L885.0 360.7 L886.0 360.7 L887.0 360.7 L888.0 360.7 L889.0 360.7 L890.0 360.7 L891.0 360.7 L892.0 360.7 L893.0 360.7 L894.0 360.7 L895.0 360.7 L896.0 360.7 L897.0 360.7 L898.0 360.7 L899.0 360.7 L900.0 360.7 L901.0 360.7 L902.0 360.7 L903.0 360.7 L904.0 360.7 L905.0 360.7 L906.0 360.7 L907.0 360.7 L908.0 360.7 L909.0 360.7 L910.0 360.7 L911.0 360.7 L912.0 360.7 L913.0 360.7 L914.0 360.7 L915.0 360.7 L916.0 360.7 L917.0 360.7 L918.0 360.7 L919.0 360.7 L920.0 360.7 L921.0 353.1 L922.0 345.4 L923.0 343.4 L924.0 341.7 L925.0 339.5 L926.0 337.8 L927.0 335.8 L928.0 333.9 L929.0 332.0 L930.0 333.2 L931.0 334.0 L932.0 335.0 L933.0 336.1 L934.0 337.3 L935.0 338.6 L936.0 339.4 L937.0 340.8 L938.0 341.8 L939.0 343.2 L940.0 344.6 L941.0 345.5 L942.0 346.9 L943.0 344.2 L944.0 341.5 L945.0 338.5 L946.0 335.9 L947.0 333.1 L948.0 329.7 L949.0 330.6 L950.0 331.0 L951.0 331.0 L952.0 331.8 L953.0 332.1 L954.0 332.9 L955.0 333.1 L956.0 335.7 L957.0 339.0 L958.0 342.1 L959.0 344.8 L960.0 347.8 L961.0 349.5 L962.0 350.8 L963.0 352.6 L964.0 354.1 L965.0 355.6 L966.0 356.2 L967.0 356.9 L968.0 357.6 L969.0 358.3 L970.0 359.0 L971.0 359.1 L972.0 359.1 L973.0 359.2 L974.0 359.2 L975.0 359.3 L976.0 359.4 L977.0 359.5 L978.0 359.5 L979.0 359.6 L980.0 359.7 L981.0 359.7 L982.0 359.7 L983.0 359.7 L984.0 359.7 L985.0 359.7 L986.0 359.7 L987.0 359.7 L988.0 359.7 L989.0 359.8 L990.0 359.8 L991.0 359.8 L992.0 359.8 L993.0 359.8 L994.0 359.8 L995.0 359.8 L996.0 359.8 L997.0 359.8 L998.0 359.8 L999.0 359.8 L1000.0 359.8 L1001.0 359.8 L1002.0 359.8 L1003.0 359.8 L1004.0 359.8 L1005.0 359.8 L1006.0 359.8 L1007.0 359.9 L1008.0 359.9 L1009.0 359.9 L1010.0 359.9 L1011.0 359.9 L1012.0 359.9 L1013.0 359.9 L1014.0 359.9 L1015.0 359.9 L1016.0 351.8 L1017.0 347.8 L1018.0 344.4 L1019.0 340.9 L1020.0 337.2 L1021.0 338.2 L1022.0 338.8 L1023.0 340.3 L1024.0 341.1 L1025.0 341.7 L1026.0 343.0 L1027.0 343.2 L1028.0 344.0 L1029.0 344.8 L1030.0 344.8 L1031.0 345.6 L1032.0 346.0 L1033.0 346.8 L1034.0 348.8 L1035.0 351.7 L1036.0 354.0 L1037.0 356.5 L1038.0 356.0 L1039.0 355.4 L1040.0 355.1 L1041.0 355.0 L1042.0 355.2 L1043.0 355.1 L1044.0 355.2 L1045.0 355.3 L1046.0 355.4 L1047.0 355.5 L1048.0 355.6 L1049.0 355.7 L1050.0 355.8 L1051.0 355.8 L1052.0 355.8 L1053.0 355.9 L1054.0 356.1 L1055.0 356.2 L1056.0 356.3 L1057.0 356.4 L1058.0 356.5 L1059.0 356.6 L1060.0 356.8 L1061.0 356.8 L1062.0 357.0 L1063.0 357.1 L1064.0 357.3 L1065.0 357.4 L1066.0 357.5 L1067.0 357.8 L1068.0 358.0 L1069.0 358.2 L1070.0 358.5 L1071.0 358.8 L1072.0 359.0 L1073.0 354.2 L1074.0 349.4 L1075.0 347.0 L1076.0 344.2 L1077.0 341.5 L1078.0 338.5 L1079.0 336.1 L1080.0 337.6 L1081.0 339.1 L1082.0 340.2 L1083.0 341.4 L1084.0 342.9 L1085.0 344.6 L1086.0 345.8 L1087.0 347.1 L1088.0 348.6 L1089.0 350.1 L1090.0 351.8 L1091.0 352.8 L1092.0 354.1 L1093.0 355.3 L1094.0 356.5 L1095.0 357.8 L1096.0 359.0 L1097.0 359.0 L1098.0 359.0 L1099.0 359.0 L1100.0 359.1 L1101.0 359.1 L1102.0 359.1 L1103.0 359.1 L1104.0 359.1 L1105.0 359.1 L1106.0 359.1 L1107.0 359.1 L1108.0 359.2 L1109.0 359.2 L1110.0 359.2 L1111.0 359.2 L1112.0 359.2 L1113.0 359.2 L1114.0 359.2 L1115.0 359.3 L1116.0 359.3 L1117.0 359.3 L1118.0 359.3 L1119.0 359.3 L1120.0 359.3 L1121.0 359.3 L1122.0 359.4 L1123.0 359.4 L1124.0 359.4 L1125.0 359.4 L1126.0 359.4 L1127.0 359.4 L1128.0 359.4 L1129.0 359.4 L1130.0 359.5 L1131.0 359.5 L1132.0 359.5 L1133.0 359.5 L1134.0 358.5 L1135.0 357.5 L1136.0 356.5 L1137.0 355.3 L1138.0 354.1 L1139.0 353.1 L1140.0 351.9 L1141.0 350.7 L1142.0 350.1 L1143.0 350.3 L1144.0 349.7 L1145.0 349.8 L1146.0 349.3 L1147.0 349.4 L1148.0 349.5 L1149.0 349.8 L1150.0 349.6 L1151.0 349.8 L1152.0 349.8 L1153.0 349.8 L1154.0 350.3 L1155.0 350.0 L1156.0 350.4 L1157.0 350.2 L1158.0 350.1 L1159.0 350.3 L1160.0 350.4 L1161.0 350.4 L1162.0 351.0 L1163.0 351.1 L1164.0 351.2 L1165.0 350.9 L1166.0 351.4 L1167.0 351.4 L1168.0 351.6 L1169.0 351.5 L1170.0 352.0 L1171.0 351.9 L1172.0 351.8 L1173.0 352.1 L1174.0 352.2 L1175.0 352.7 L1176.0 352.7 L1177.0 353.3 L1178.0 353.7 L1179.0 354.0 L1180.0 354.3 L1181.0 354.8 L1182.0 355.2 L1183.0 355.6 L1184.0 356.0 L1185.0 356.7 L1186.0 357.3 L1187.0 357.9 L1188.0 358.5 L1189.0 358.2 L1190.0 358.0 L1191.0 357.8 L1192.0 357.5 L1193.0 355.9 L1194.0 354.5 L1195.0 352.9 L1196.0 351.8 L1197.0 350.2 L1198.0 348.6 L1199.0 347.1 L1200.0 345.8 L1200.0 377.3 L1199.0 376.0 L1198.0 374.7 L1197.0 372.7 L1196.0 371.3 L1195.0 369.9 L1194.0 368.6 L1193.0 367.1 L1192.0 365.5 L1191.0 365.2 L1190.0 365.0 L1189.0 364.8 L1188.0 364.5 L1187.0 365.1 L1186.0 365.7 L1185.0 366.3 L1184.0 366.9 L1183.0 367.4 L1182.0 367.8 L1181.0 368.2 L1180.0 368.6 L1179.0 368.9 L1178.0 369.2 L1177.0 369.6 L1176.0 370.0 L1175.0 370.3 L1174.0 370.5 L1173.0 370.8 L1172.0 370.8 L1171.0 371.2 L1170.0 371.1 L1169.0 371.5 L1168.0 371.3 L1167.0 371.6 L1166.0 371.4 L1165.0 371.6 L1164.0 372.1 L1163.0 371.8 L1162.0 372.4 L1161.0 372.7 L1160.0 372.4 L1159.0 372.5 L1158.0 372.4 L1157.0 373.0 L1156.0 372.5 L1155.0 372.7 L1154.0 372.9 L1153.0 373.2 L1152.0 373.1 L1151.0 373.1 L1150.0 373.4 L1149.0 373.4 L1148.0 373.3 L1147.0 373.3 L1146.0 373.4 L1145.0 373.3 L1144.0 372.8 L1143.0 373.1 L1142.0 372.7 L1141.0 372.5 L1140.0 371.4 L1139.0 369.9 L1138.0 368.8 L1137.0 367.6 L1136.0 366.5 L1135.0 365.5 L1134.0 364.5 L1133.0 363.5 L1132.0 363.5 L1131.0 363.5 L1130.0 363.5 L1129.0 363.6 L1128.0 363.6 L1127.0 363.6 L1126.0 363.6 L1125.0 363.6 L1124.0 363.6 L1123.0 363.6 L1122.0 363.6 L1121.0 363.7 L1120.0 363.7 L1119.0 363.7 L1118.0 363.7 L1117.0 363.7 L1116.0 363.7 L1115.0 363.7 L1114.0 363.8 L1113.0 363.8 L1112.0 363.8 L1111.0 363.8 L1110.0 363.8 L1109.0 363.8 L1108.0 363.8 L1107.0 363.9 L1106.0 363.9 L1105.0 363.9 L1104.0 363.9 L1103.0 363.9 L1102.0 363.9 L1101.0 363.9 L1100.0 363.9 L1099.0 364.0 L1098.0 364.0 L1097.0 364.0 L1096.0 364.0 L1095.0 365.2 L1094.0 366.5 L1093.0 367.7 L1092.0 368.9 L1091.0 370.2 L1090.0 371.4 L1089.0 372.8 L1088.0 374.1 L1087.0 375.6 L1086.0 377.4 L1085.0 378.7 L1084.0 380.2 L1083.0 381.2 L1082.0 383.0 L1081.0 384.3 L1080.0 385.3 L1079.0 386.9 L1078.0 384.1 L1077.0 381.5 L1076.0 379.0 L1075.0 376.0 L1074.0 373.6 L1073.0 368.7 L1072.0 364.0 L1071.0 364.2 L1070.0 364.5 L1069.0 364.8 L1068.0 365.0 L1067.0 365.2 L1066.0 365.5 L1065.0 365.6 L1064.0 365.7 L1063.0 365.9 L1062.0 366.0 L1061.0 366.1 L1060.0 366.2 L1059.0 366.4 L1058.0 366.5 L1057.0 366.6 L1056.0 366.6 L1055.0 366.8 L1054.0 366.8 L1053.0 367.0 L1052.0 367.1 L1051.0 367.2 L1050.0 367.3 L1049.0 367.3 L1048.0 367.5 L1047.0 367.5 L1046.0 367.7 L1045.0 367.8 L1044.0 367.7 L1043.0 367.8 L1042.0 367.9 L1041.0 367.8 L1040.0 368.0 L1039.0 367.5 L1038.0 367.0 L1037.0 366.5 L1036.0 368.9 L1035.0 371.4 L1034.0 374.1 L1033.0 376.8 L1032.0 376.7 L1031.0 377.4 L1030.0 377.8 L1029.0 378.3 L1028.0 379.1 L1027.0 379.3 L1026.0 380.2 L1025.0 380.7 L1024.0 381.8 L1023.0 382.9 L1022.0 384.2 L1021.0 385.1 L1020.0 385.9 L1019.0 382.6 L1018.0 378.8 L1017.0 375.1 L1016.0 371.4 L1015.0 363.1 L1014.0 363.1 L1013.0 363.1 L1012.0 363.1 L1011.0 363.1 L1010.0 363.1 L1009.0 363.1 L1008.0 363.1 L1007.0 363.1 L1006.0 363.2 L1005.0 363.2 L1004.0 363.2 L1003.0 363.2 L1002.0 363.2 L1001.0 363.2 L1000.0 363.2 L999.0 363.2 L998.0 363.2 L997.0 363.2 L996.0 363.2 L995.0 363.2 L994.0 363.2 L993.0 363.2 L992.0 363.2 L991.0 363.2 L990.0 363.2 L989.0 363.2 L988.0 363.3 L987.0 363.3 L986.0 363.3 L985.0 363.3 L984.0 363.3 L983.0 363.3 L982.0 363.3 L981.0 363.3 L980.0 363.3 L979.0 363.4 L978.0 363.5 L977.0 363.5 L976.0 363.6 L975.0 363.7 L974.0 363.8 L973.0 363.8 L972.0 363.9 L971.0 363.9 L970.0 364.0 L969.0 364.7 L968.0 365.4 L967.0 366.1 L966.0 366.8 L965.0 367.4 L964.0 369.1 L963.0 370.6 L962.0 372.3 L961.0 373.3 L960.0 374.9 L959.0 377.8 L958.0 381.3 L957.0 383.8 L956.0 387.3 L955.0 390.0 L954.0 390.7 L953.0 390.6 L952.0 391.2 L951.0 391.9 L950.0 391.9 L949.0 392.5 L948.0 392.7 L947.0 390.2 L946.0 387.5 L945.0 384.7 L944.0 381.8 L943.0 379.0 L942.0 376.2 L941.0 377.6 L940.0 378.3 L939.0 379.8 L938.0 381.0 L937.0 382.6 L936.0 383.5 L935.0 384.6 L934.0 385.4 L933.0 386.6 L932.0 387.9 L931.0 389.1 L930.0 389.7 L929.0 391.2 L928.0 389.1 L927.0 387.4 L926.0 385.2 L925.0 383.5 L924.0 381.7 L923.0 379.6 L922.0 377.6 L921.0 369.9 L920.0 362.3 L919.0 362.3 L918.0 362.3 L917.0 362.3 L916.0 362.3 L915.0 362.3 L914.0 362.3 L913.0 362.3 L912.0 362.3 L911.0 362.3 L910.0 362.3 L909.0 362.3 L908.0 362.3 L907.0 362.3 L906.0 362.3 L905.0 362.3 L904.0 362.3 L903.0 362.3 L902.0 362.3 L901.0 362.3 L900.0 362.3 L899.0 362.3 L898.0 362.3 L897.0 362.3 L896.0 362.3 L895.0 362.3 L894.0 362.3 L893.0 362.3 L892.0 362.3 L891.0 362.3 L890.0 362.3 L889.0 362.3 L888.0 362.3 L887.0 362.3 L886.0 362.3 L885.0 362.3 L884.0 362.3 L883.0 362.3 L882.0 362.3 L881.0 362.3 L880.0 362.3 L879.0 362.3 L878.0 362.3 L877.0 362.3 L876.0 362.3 L875.0 362.3 L874.0 362.3 L873.0 362.3 L872.0 362.3 L871.0 362.3 L870.0 362.3 L869.0 362.3 L868.0 362.3 L867.0 362.3 L866.0 362.3 L865.0 362.3 L864.0 362.3 L863.0 362.3 L862.0 362.3 L861.0 362.3 L860.0 362.3 L859.0 362.3 L858.0 362.3 L857.0 362.3 L856.0 362.3 L855.0 362.3 L854.0 362.3 L853.0 362.3 L852.0 362.3 L851.0 362.3 L850.0 363.3 L849.0 363.3 L848.0 363.3 L847.0 363.3 L846.0 363.3 L845.0 363.3 L844.0 363.3 L843.0 363.3 L842.0 363.3 L841.0 363.3 L840.0 363.3 L839.0 363.3 L838.0 363.3 L837.0 363.3 L836.0 363.3 L835.0 363.3 L834.0 363.3 L833.0 363.3 L832.0 363.3 L831.0 363.3 L830.0 363.3 L829.0 363.3 L828.0 363.3 L827.0 363.3 L826.0 363.3 L825.0 363.3 L824.0 363.3 L823.0 363.3 L822.0 363.3 L821.0 363.3 L820.0 363.3 L819.0 363.3 L818.0 363.3 L817.0 363.3 L816.0 363.3 L815.0 363.5 L814.0 363.6 L813.0 363.8 L812.0 364.0 L811.0 363.8 L810.0 363.6 L809.0 363.5 L808.0 363.3 L807.0 363.3 L806.0 363.3 L805.0 363.3 L804.0 363.3 L803.0 363.3 L802.0 363.3 L801.0 363.3 L800.0 363.3 L799.0 363.3 L798.0 363.3 L797.0 363.3 L796.0 363.3 L795.0 363.3 L794.0 363.4 L793.0 363.6 L792.0 363.7 L791.0 363.9 L790.0 364.0 L789.0 365.6 L788.0 367.3 L787.0 369.0 L786.0 370.6 L785.0 372.3 L784.0 373.8 L783.0 375.7 L782.0 377.1 L781.0 378.2 L780.0 380.0 L779.0 381.4 L778.0 383.0 L777.0 383.9 L776.0 385.8 L775.0 386.8 L774.0 388.6 L773.0 390.0 L772.0 386.9 L771.0 383.7 L770.0 380.9 L769.0 377.7 L768.0 374.6 L767.0 371.5 L766.0 369.4 L765.0 367.3 L764.0 365.2 L763.0 363.1 L762.0 364.1 L761.0 365.1 L760.0 366.0 L759.0 367.1 L758.0 368.0 L757.0 368.9 L756.0 369.5 L755.0 369.6 L754.0 370.2 L753.0 370.4 L752.0 371.0 L751.0 371.0 L750.0 371.6 L749.0 372.0 L748.0 372.2 L747.0 373.0 L746.0 373.1 L745.0 373.8 L744.0 374.0 L743.0 374.6 L742.0 374.7 L741.0 375.0 L740.0 375.3 L739.0 376.0 L738.0 376.1 L737.0 377.0 L736.0 377.1 L735.0 377.7 L734.0 378.2 L733.0 378.6 L732.0 378.7 L731.0 379.2 L730.0 379.8 L729.0 380.0 L728.0 380.9 L727.0 381.4 L726.0 381.4 L725.0 382.1 L724.0 381.5 L723.0 380.9 L722.0 380.6 L721.0 380.2 L720.0 379.3 L719.0 377.5 L718.0 374.9 L717.0 372.6 L716.0 370.2 L715.0 368.1 L714.0 365.8 L713.0 363.5 L712.0 364.0 L711.0 364.6 L710.0 365.1 L709.0 365.7 L708.0 366.2 L707.0 366.7 L706.0 367.3 L705.0 367.9 L704.0 368.5 L703.0 368.7 L702.0 369.6 L701.0 370.1 L700.0 370.3 L699.0 370.6 L698.0 371.4 L697.0 371.7 L696.0 371.9 L695.0 372.4 L694.0 372.7 L693.0 372.9 L692.0 373.5 L691.0 373.9 L690.0 374.5 L689.0 374.8 L688.0 374.7 L687.0 375.5 L686.0 375.8 L685.0 376.1 L684.0 376.7 L683.0 376.6 L682.0 377.1 L681.0 377.6 L680.0 378.1 L679.0 378.4 L678.0 379.6 L677.0 380.2 L676.0 380.8 L675.0 381.6 L674.0 382.2 L673.0 383.2 L672.0 383.7 L671.0 384.3 L670.0 385.1 L669.0 385.5 L668.0 386.4 L667.0 385.6 L666.0 384.5 L665.0 383.2 L664.0 382.3 L663.0 381.3 L662.0 380.1 L661.0 378.9 L660.0 377.7 L659.0 376.9 L658.0 375.8 L657.0 374.2 L656.0 370.1 L655.0 366.0 L654.0 366.4 L653.0 366.8 L652.0 367.1 L651.0 367.6 L650.0 368.0 L649.0 368.8 L648.0 369.7 L647.0 370.1 L646.0 371.3 L645.0 371.6 L644.0 372.3 L643.0 373.3 L642.0 373.7 L641.0 374.5 L640.0 375.6 L639.0 376.6 L638.0 377.1 L637.0 378.4 L636.0 378.9 L635.0 380.1 L634.0 380.7 L633.0 381.8 L632.0 382.5 L631.0 383.7 L630.0 384.3 L629.0 385.8 L628.0 386.8 L627.0 387.4 L626.0 388.7 L625.0 389.2 L624.0 390.2 L623.0 391.0 L622.0 391.9 L621.0 392.5 L620.0 393.4 L619.0 390.5 L618.0 387.3 L617.0 384.5 L616.0 381.6 L615.0 364.0 L614.0 364.1 L613.0 364.1 L612.0 364.2 L611.0 364.3 L610.0 364.4 L609.0 364.4 L608.0 364.5 L607.0 364.8 L606.0 365.0 L605.0 365.2 L604.0 365.5 L603.0 365.7 L602.0 365.8 L601.0 366.0 L600.0 366.2 L599.0 366.3 L598.0 366.5 L597.0 365.0 L596.0 363.5 L595.0 362.9 L594.0 362.3 L593.0 362.9 L592.0 363.5 L591.0 362.9 L590.0 362.3 L589.0 362.3 L588.0 362.3 L587.0 362.3 L586.0 362.3 L585.0 362.3 L584.0 362.3 L583.0 362.3 L582.0 362.3 L581.0 362.3 L580.0 362.3 L579.0 362.3 L578.0 362.3 L577.0 362.3 L576.0 362.3 L575.0 362.3 L574.0 362.3 L573.0 362.3 L572.0 362.3 L571.0 362.3 L570.0 362.3 L569.0 362.3 L568.0 362.3 L567.0 362.3 L566.0 362.3 L565.0 362.3 L564.0 362.3 L563.0 362.3 L562.0 362.3 L561.0 362.3 L560.0 362.3 L559.0 362.3 L558.0 362.3 L557.0 362.3 L556.0 362.3 L555.0 362.3 L554.0 362.3 L553.0 362.3 L552.0 362.3 L551.0 362.3 L550.0 362.3 L549.0 362.3 L548.0 362.3 L547.0 362.3 L546.0 362.3 L545.0 362.3 L544.0 362.3 L543.0 362.3 L542.0 362.3 L541.0 362.3 L540.0 362.3 L539.0 362.3 L538.0 362.3 L537.0 362.3 L536.0 362.3 L535.0 362.3 L534.0 362.3 L533.0 362.3 L532.0 362.3 L531.0 362.3 L530.0 362.3 L529.0 362.3 L528.0 362.3 L527.0 362.3 L526.0 362.3 L525.0 362.3 L524.0 362.3 L523.0 362.3 L522.0 362.3 L521.0 362.3 L520.0 362.3 L519.0 362.3 L518.0 362.3 L517.0 362.3 L516.0 362.3 L515.0 362.3 L514.0 362.3 L513.0 363.1 L512.0 363.1 L511.0 363.1 L510.0 363.1 L509.0 363.1 L508.0 363.1 L507.0 363.1 L506.0 363.1 L505.0 363.1 L504.0 363.1 L503.0 363.2 L502.0 363.2 L501.0 363.2 L500.0 363.2 L499.0 363.2 L498.0 363.2 L497.0 363.2 L496.0 363.2 L495.0 363.2 L494.0 363.2 L493.0 363.2 L492.0 363.2 L491.0 363.2 L490.0 363.2 L489.0 363.2 L488.0 363.2 L487.0 363.2 L486.0 363.2 L485.0 363.3 L484.0 363.3 L483.0 363.3 L482.0 363.3 L481.0 363.3 L480.0 363.3 L479.0 363.3 L478.0 363.3 L477.0 363.3 L476.0 363.3 L475.0 363.3 L474.0 363.3 L473.0 363.3 L472.0 363.3 L471.0 363.3 L470.0 363.3 L469.0 363.3 L468.0 363.3 L467.0 363.4 L466.0 363.4 L465.0 363.4 L464.0 363.4 L463.0 363.4 L462.0 363.4 L461.0 363.4 L460.0 363.4 L459.0 363.4 L458.0 363.4 L457.0 363.4 L456.0 363.4 L455.0 363.4 L454.0 363.4 L453.0 363.4 L452.0 363.4 L451.0 363.4 L450.0 363.4 L449.0 363.5 L448.0 363.5 L447.0 363.5 L446.0 363.5 L445.0 363.5 L444.0 363.5 L443.0 363.5 L442.0 363.5 L441.0 363.5 L440.0 363.5 L439.0 366.0 L438.0 368.5 L437.0 371.2 L436.0 373.5 L435.0 375.7 L434.0 377.9 L433.0 380.2 L432.0 382.9 L431.0 385.4 L430.0 387.2 L429.0 387.7 L428.0 387.4 L427.0 387.7 L426.0 387.5 L425.0 387.6 L424.0 387.5 L423.0 387.5Z" fill="#535b8f"/></svg><div style="position:absolute;left:4px;top:6px;width:82.5px;height:23.5px;border-radius:11px;background:#7680c6;opacity:.85"></div></div><div style="position:absolute;left:433.27px;top:317.15px;font-size:16.60px;line-height:16.60px;font-weight:400;color:rgba(255,255,255,0.9);white-space:nowrap;transform:scaleX(0.9242);transform-origin:0 0;-webkit-text-stroke:0.15px rgba(255,255,255,0.9);">Piano.wav</div><div style="position:absolute;left:423px;top:426px;width:790px;height:112px;background:#e36962;border-radius:6px;overflow:hidden"><svg style="position:absolute;left:-423px;top:-426px" width="1213" height="675"><path d="M423.0 471.4 L424.0 471.7 L425.0 471.8 L426.0 472.3 L427.0 472.3 L428.0 472.5 L429.0 472.7 L430.0 473.1 L431.0 473.1 L432.0 473.3 L433.0 473.5 L434.0 473.5 L435.0 473.7 L436.0 473.8 L437.0 473.7 L438.0 474.1 L439.0 473.9 L440.0 474.0 L441.0 474.1 L442.0 474.4 L443.0 474.4 L444.0 474.6 L445.0 474.6 L446.0 474.6 L447.0 474.8 L448.0 473.8 L449.0 472.9 L450.0 471.7 L451.0 467.9 L452.0 463.6 L453.0 459.8 L454.0 461.4 L455.0 463.9 L456.0 465.4 L457.0 467.6 L458.0 469.6 L459.0 470.9 L460.0 472.0 L461.0 473.4 L462.0 474.8 L463.0 474.3 L464.0 474.0 L465.0 473.8 L466.0 473.5 L467.0 473.2 L468.0 473.6 L469.0 474.0 L470.0 474.3 L471.0 474.9 L472.0 475.2 L473.0 475.7 L474.0 473.9 L475.0 472.2 L476.0 470.1 L477.0 468.0 L478.0 466.5 L479.0 465.2 L480.0 463.6 L481.0 462.3 L482.0 463.4 L483.0 464.0 L484.0 464.5 L485.0 465.6 L486.0 466.5 L487.0 466.8 L488.0 467.9 L489.0 467.7 L490.0 468.1 L491.0 468.1 L492.0 468.5 L493.0 468.9 L494.0 468.6 L495.0 469.3 L496.0 469.3 L497.0 469.4 L498.0 469.9 L499.0 470.0 L500.0 469.8 L501.0 470.8 L502.0 471.4 L503.0 472.1 L504.0 472.6 L505.0 473.3 L506.0 474.1 L507.0 471.5 L508.0 469.4 L509.0 466.4 L510.0 465.4 L511.0 463.6 L512.0 462.4 L513.0 463.6 L514.0 464.8 L515.0 465.6 L516.0 466.7 L517.0 467.6 L518.0 468.7 L519.0 469.8 L520.0 470.8 L521.0 471.1 L522.0 471.1 L523.0 471.2 L524.0 471.6 L525.0 472.1 L526.0 472.4 L527.0 472.6 L528.0 473.0 L529.0 473.0 L530.0 473.4 L531.0 473.5 L532.0 474.0 L533.0 474.1 L534.0 474.4 L535.0 474.9 L536.0 475.1 L537.0 473.7 L538.0 472.3 L539.0 470.8 L540.0 470.0 L541.0 466.4 L542.0 463.1 L543.0 459.6 L544.0 462.4 L545.0 465.4 L546.0 468.5 L547.0 471.6 L548.0 472.1 L549.0 472.1 L550.0 472.4 L551.0 472.6 L552.0 472.8 L553.0 472.7 L554.0 473.2 L555.0 473.2 L556.0 473.5 L557.0 473.5 L558.0 474.0 L559.0 474.2 L560.0 474.0 L561.0 473.3 L562.0 472.0 L563.0 471.2 L564.0 470.0 L565.0 469.1 L566.0 468.0 L567.0 466.7 L568.0 464.7 L569.0 463.2 L570.0 461.5 L571.0 462.5 L572.0 463.5 L573.0 464.7 L574.0 465.8 L575.0 467.4 L576.0 468.3 L577.0 469.8 L578.0 471.1 L579.0 472.0 L580.0 473.5 L581.0 473.6 L582.0 473.7 L583.0 473.7 L584.0 474.0 L585.0 474.2 L586.0 474.3 L587.0 474.4 L588.0 474.4 L589.0 474.4 L590.0 474.7 L591.0 474.9 L592.0 474.9 L593.0 474.5 L594.0 473.9 L595.0 473.3 L596.0 472.9 L597.0 472.4 L598.0 471.5 L599.0 471.1 L600.0 470.5 L601.0 469.8 L602.0 469.1 L603.0 468.9 L604.0 467.8 L605.0 467.4 L606.0 467.7 L607.0 467.9 L608.0 467.9 L609.0 468.3 L610.0 468.3 L611.0 468.9 L612.0 469.1 L613.0 469.2 L614.0 469.5 L615.0 470.2 L616.0 470.6 L617.0 470.6 L618.0 471.2 L619.0 471.3 L620.0 472.1 L621.0 472.4 L622.0 472.5 L623.0 471.2 L624.0 469.7 L625.0 468.7 L626.0 467.4 L627.0 466.1 L628.0 464.7 L629.0 465.8 L630.0 466.8 L631.0 467.9 L632.0 469.1 L633.0 469.6 L634.0 471.0 L635.0 471.6 L636.0 472.1 L637.0 472.2 L638.0 472.3 L639.0 472.7 L640.0 472.8 L641.0 473.2 L642.0 473.3 L643.0 473.5 L644.0 473.6 L645.0 473.9 L646.0 474.2 L647.0 474.5 L648.0 474.7 L649.0 474.9 L650.0 475.1 L651.0 475.3 L652.0 475.7 L653.0 476.0 L654.0 476.3 L655.0 476.7 L656.0 473.8 L657.0 471.2 L658.0 468.1 L659.0 465.6 L660.0 462.6 L661.0 464.4 L662.0 466.1 L663.0 467.8 L664.0 469.9 L665.0 471.5 L666.0 471.9 L667.0 472.1 L668.0 471.8 L669.0 472.0 L670.0 471.6 L671.0 471.8 L672.0 471.8 L673.0 472.2 L674.0 472.0 L675.0 472.0 L676.0 471.9 L677.0 472.1 L678.0 472.0 L679.0 472.4 L680.0 472.2 L681.0 472.5 L682.0 472.4 L683.0 472.5 L684.0 472.7 L685.0 472.6 L686.0 471.0 L687.0 468.9 L688.0 467.3 L689.0 465.8 L690.0 464.0 L691.0 462.4 L692.0 463.9 L693.0 465.8 L694.0 467.2 L695.0 468.8 L696.0 470.2 L697.0 471.4 L698.0 471.9 L699.0 472.3 L700.0 472.6 L701.0 472.5 L702.0 472.6 L703.0 473.0 L704.0 473.0 L705.0 473.3 L706.0 473.6 L707.0 474.1 L708.0 473.9 L709.0 474.2 L710.0 474.6 L711.0 474.8 L712.0 475.0 L713.0 474.2 L714.0 473.2 L715.0 472.5 L716.0 471.7 L717.0 470.5 L718.0 470.2 L719.0 469.2 L720.0 468.0 L721.0 467.2 L722.0 466.4 L723.0 466.1 L724.0 466.3 L725.0 466.8 L726.0 467.2 L727.0 468.0 L728.0 468.9 L729.0 468.9 L730.0 470.0 L731.0 470.1 L732.0 470.8 L733.0 471.2 L734.0 472.2 L735.0 472.3 L736.0 472.3 L737.0 472.5 L738.0 472.6 L739.0 472.4 L740.0 472.2 L741.0 472.1 L742.0 472.3 L743.0 472.3 L744.0 472.2 L745.0 471.8 L746.0 469.9 L747.0 467.7 L748.0 465.4 L749.0 463.2 L750.0 460.9 L751.0 461.5 L752.0 462.3 L753.0 463.6 L754.0 464.3 L755.0 465.1 L756.0 465.9 L757.0 466.5 L758.0 467.0 L759.0 467.1 L760.0 467.6 L761.0 467.9 L762.0 468.0 L763.0 468.4 L764.0 468.9 L765.0 469.0 L766.0 469.0 L767.0 469.7 L768.0 469.5 L769.0 470.1 L770.0 470.5 L771.0 470.3 L772.0 471.1 L773.0 470.9 L774.0 471.2 L775.0 471.8 L776.0 470.7 L777.0 469.6 L778.0 468.3 L779.0 467.1 L780.0 466.0 L781.0 466.0 L782.0 466.1 L783.0 466.3 L784.0 467.0 L785.0 467.2 L786.0 467.0 L787.0 467.8 L788.0 467.8 L789.0 467.9 L790.0 468.3 L791.0 468.3 L792.0 469.0 L793.0 468.8 L794.0 469.1 L795.0 469.8 L796.0 470.0 L797.0 470.2 L798.0 470.5 L799.0 470.6 L800.0 470.8 L801.0 470.3 L802.0 469.6 L803.0 468.4 L804.0 467.8 L805.0 467.1 L806.0 466.0 L807.0 465.5 L808.0 464.7 L809.0 464.8 L810.0 465.0 L811.0 465.4 L812.0 465.9 L813.0 466.3 L814.0 466.4 L815.0 466.7 L816.0 466.8 L817.0 467.6 L818.0 467.8 L819.0 468.0 L820.0 468.3 L821.0 468.7 L822.0 468.7 L823.0 468.6 L824.0 469.1 L825.0 469.0 L826.0 468.9 L827.0 469.3 L828.0 469.3 L829.0 469.4 L830.0 469.9 L831.0 469.9 L832.0 470.0 L833.0 469.1 L834.0 468.3 L835.0 467.2 L836.0 466.4 L837.0 465.1 L838.0 464.1 L839.0 463.3 L840.0 462.4 L841.0 463.3 L842.0 464.2 L843.0 465.5 L844.0 466.5 L845.0 467.3 L846.0 468.1 L847.0 468.8 L848.0 470.3 L849.0 470.5 L850.0 470.3 L851.0 470.9 L852.0 470.8 L853.0 471.2 L854.0 471.4 L855.0 471.5 L856.0 471.8 L857.0 472.2 L858.0 472.4 L859.0 472.2 L860.0 472.0 L861.0 471.1 L862.0 470.8 L863.0 470.4 L864.0 470.2 L865.0 469.9 L866.0 469.0 L867.0 468.7 L868.0 467.8 L869.0 467.2 L870.0 466.6 L871.0 466.5 L872.0 465.8 L873.0 466.3 L874.0 466.3 L875.0 466.4 L876.0 466.9 L877.0 467.1 L878.0 467.5 L879.0 467.5 L880.0 467.4 L881.0 467.8 L882.0 468.0 L883.0 467.6 L884.0 468.0 L885.0 467.8 L886.0 468.0 L887.0 467.9 L888.0 468.2 L889.0 468.2 L890.0 468.1 L891.0 468.4 L892.0 468.2 L893.0 467.9 L894.0 467.7 L895.0 467.7 L896.0 467.7 L897.0 467.5 L898.0 467.0 L899.0 467.3 L900.0 466.6 L901.0 466.8 L902.0 466.3 L903.0 466.6 L904.0 466.7 L905.0 467.3 L906.0 467.5 L907.0 467.5 L908.0 468.0 L909.0 468.0 L910.0 467.9 L911.0 468.1 L912.0 468.1 L913.0 468.2 L914.0 468.0 L915.0 467.8 L916.0 467.7 L917.0 467.7 L918.0 467.4 L919.0 467.8 L920.0 468.0 L921.0 468.1 L922.0 468.5 L923.0 468.6 L924.0 468.5 L925.0 469.1 L926.0 468.9 L927.0 469.4 L928.0 469.4 L929.0 469.6 L930.0 469.8 L931.0 470.1 L932.0 470.4 L933.0 470.4 L934.0 470.7 L935.0 471.1 L936.0 470.8 L937.0 471.1 L938.0 471.4 L939.0 471.7 L940.0 472.0 L941.0 471.8 L942.0 472.2 L943.0 472.2 L944.0 472.4 L945.0 472.8 L946.0 472.9 L947.0 472.9 L948.0 473.3 L949.0 473.5 L950.0 473.9 L951.0 474.1 L952.0 474.4 L953.0 474.4 L954.0 474.8 L955.0 475.0 L956.0 472.9 L957.0 470.8 L958.0 468.7 L959.0 466.8 L960.0 464.8 L961.0 462.4 L962.0 464.0 L963.0 466.0 L964.0 467.5 L965.0 469.3 L966.0 471.1 L967.0 472.3 L968.0 474.3 L969.0 474.3 L970.0 474.0 L971.0 474.1 L972.0 473.9 L973.0 473.8 L974.0 474.0 L975.0 473.8 L976.0 473.6 L977.0 473.7 L978.0 473.7 L979.0 473.6 L980.0 473.4 L981.0 473.6 L982.0 473.6 L983.0 473.5 L984.0 473.4 L985.0 473.1 L986.0 472.0 L987.0 470.2 L988.0 468.6 L989.0 467.6 L990.0 466.1 L991.0 464.7 L992.0 463.2 L993.0 461.5 L994.0 463.9 L995.0 465.8 L996.0 467.8 L997.0 470.2 L998.0 472.4 L999.0 472.3 L1000.0 472.1 L1001.0 472.4 L1002.0 472.4 L1003.0 472.4 L1004.0 472.6 L1005.0 472.6 L1006.0 472.6 L1007.0 472.7 L1008.0 472.5 L1009.0 472.7 L1010.0 472.5 L1011.0 472.7 L1012.0 472.7 L1013.0 472.9 L1014.0 472.9 L1015.0 473.0 L1016.0 471.5 L1017.0 470.5 L1018.0 469.2 L1019.0 467.6 L1020.0 466.6 L1021.0 464.9 L1022.0 463.7 L1023.0 462.4 L1024.0 463.1 L1025.0 463.4 L1026.0 464.0 L1027.0 465.1 L1028.0 465.1 L1029.0 466.0 L1030.0 466.3 L1031.0 466.8 L1032.0 467.4 L1033.0 468.0 L1034.0 467.9 L1035.0 468.1 L1036.0 468.3 L1037.0 468.3 L1038.0 468.7 L1039.0 468.4 L1040.0 469.0 L1041.0 468.9 L1042.0 469.0 L1043.0 469.5 L1044.0 469.3 L1045.0 469.8 L1046.0 468.6 L1047.0 467.4 L1048.0 466.4 L1049.0 465.2 L1050.0 464.3 L1051.0 463.7 L1052.0 464.7 L1053.0 465.9 L1054.0 466.8 L1055.0 468.0 L1056.0 468.8 L1057.0 470.0 L1058.0 470.9 L1059.0 471.4 L1060.0 471.5 L1061.0 471.7 L1062.0 472.1 L1063.0 472.5 L1064.0 472.3 L1065.0 473.0 L1066.0 473.1 L1067.0 473.1 L1068.0 473.2 L1069.0 473.6 L1070.0 473.8 L1071.0 473.2 L1072.0 472.2 L1073.0 471.5 L1074.0 470.1 L1075.0 469.6 L1076.0 468.6 L1077.0 468.0 L1078.0 466.9 L1079.0 466.0 L1080.0 465.3 L1081.0 464.5 L1082.0 463.7 L1083.0 462.5 L1084.0 463.9 L1085.0 465.3 L1086.0 467.3 L1087.0 468.7 L1088.0 470.3 L1089.0 471.3 L1090.0 473.2 L1091.0 473.0 L1092.0 473.2 L1093.0 473.7 L1094.0 473.8 L1095.0 474.0 L1096.0 474.2 L1097.0 474.2 L1098.0 474.5 L1099.0 474.6 L1100.0 474.7 L1101.0 474.9 L1102.0 475.1 L1103.0 475.2 L1104.0 475.5 L1105.0 475.5 L1106.0 473.0 L1107.0 470.3 L1108.0 467.3 L1109.0 465.0 L1110.0 462.0 L1111.0 462.5 L1112.0 463.3 L1113.0 463.3 L1114.0 464.2 L1115.0 464.3 L1116.0 465.0 L1117.0 465.1 L1118.0 465.8 L1119.0 466.0 L1120.0 466.6 L1121.0 467.4 L1122.0 467.6 L1123.0 467.9 L1124.0 468.4 L1125.0 469.1 L1126.0 469.6 L1127.0 469.6 L1128.0 470.4 L1129.0 470.6 L1130.0 471.0 L1131.0 469.1 L1132.0 467.3 L1133.0 465.2 L1134.0 462.9 L1135.0 460.5 L1136.0 458.4 L1137.0 456.4 L1138.0 457.7 L1139.0 459.5 L1140.0 461.0 L1141.0 462.4 L1142.0 463.9 L1143.0 465.4 L1144.0 467.3 L1145.0 468.8 L1146.0 469.1 L1147.0 469.4 L1148.0 469.9 L1149.0 470.7 L1150.0 471.2 L1151.0 471.2 L1152.0 471.8 L1153.0 472.4 L1154.0 472.7 L1155.0 473.4 L1156.0 473.9 L1157.0 474.2 L1158.0 474.6 L1159.0 475.2 L1160.0 475.6 L1161.0 473.8 L1162.0 472.3 L1163.0 470.6 L1164.0 469.2 L1165.0 467.3 L1166.0 466.1 L1167.0 464.3 L1168.0 462.5 L1169.0 463.3 L1170.0 463.6 L1171.0 464.0 L1172.0 465.0 L1173.0 465.4 L1174.0 466.1 L1175.0 466.6 L1176.0 467.2 L1177.0 467.5 L1178.0 468.4 L1179.0 468.8 L1180.0 469.7 L1181.0 469.7 L1182.0 470.1 L1183.0 470.5 L1184.0 470.8 L1185.0 470.7 L1186.0 471.5 L1187.0 471.3 L1188.0 472.1 L1189.0 472.3 L1190.0 472.4 L1191.0 472.5 L1192.0 473.2 L1193.0 473.5 L1194.0 473.5 L1195.0 473.7 L1196.0 473.5 L1197.0 472.8 L1198.0 472.4 L1199.0 471.9 L1200.0 471.5 L1200.0 492.5 L1199.0 491.7 L1198.0 491.3 L1197.0 490.6 L1196.0 489.8 L1195.0 489.6 L1194.0 489.8 L1193.0 489.9 L1192.0 490.5 L1191.0 490.6 L1190.0 490.7 L1189.0 491.2 L1188.0 491.7 L1187.0 492.0 L1186.0 491.9 L1185.0 492.4 L1184.0 492.4 L1183.0 493.3 L1182.0 493.2 L1181.0 493.8 L1180.0 493.9 L1179.0 494.3 L1178.0 494.8 L1177.0 495.4 L1176.0 496.1 L1175.0 496.8 L1174.0 497.7 L1173.0 498.2 L1172.0 498.5 L1171.0 499.3 L1170.0 499.8 L1169.0 500.1 L1168.0 500.9 L1167.0 499.3 L1166.0 497.6 L1165.0 496.0 L1164.0 494.5 L1163.0 493.0 L1162.0 491.3 L1161.0 489.5 L1160.0 487.8 L1159.0 488.2 L1158.0 488.8 L1157.0 489.1 L1156.0 489.5 L1155.0 489.9 L1154.0 490.4 L1153.0 490.9 L1152.0 491.7 L1151.0 492.1 L1150.0 492.4 L1149.0 492.7 L1148.0 493.7 L1147.0 493.9 L1146.0 494.1 L1145.0 494.5 L1144.0 496.4 L1143.0 498.1 L1142.0 499.2 L1141.0 500.9 L1140.0 502.3 L1139.0 503.8 L1138.0 505.7 L1137.0 507.1 L1136.0 504.7 L1135.0 502.5 L1134.0 501.0 L1133.0 498.4 L1132.0 496.1 L1131.0 494.2 L1130.0 492.0 L1129.0 492.5 L1128.0 493.0 L1127.0 493.8 L1126.0 494.0 L1125.0 494.5 L1124.0 494.8 L1123.0 495.1 L1122.0 495.6 L1121.0 496.2 L1120.0 497.0 L1119.0 497.4 L1118.0 497.8 L1117.0 498.3 L1116.0 498.6 L1115.0 499.2 L1114.0 499.7 L1113.0 500.0 L1112.0 500.2 L1111.0 501.0 L1110.0 501.4 L1109.0 498.4 L1108.0 495.6 L1107.0 493.3 L1106.0 490.6 L1105.0 487.7 L1104.0 488.0 L1103.0 488.2 L1102.0 488.2 L1101.0 488.4 L1100.0 488.5 L1099.0 488.8 L1098.0 489.0 L1097.0 489.1 L1096.0 489.2 L1095.0 489.6 L1094.0 489.6 L1093.0 489.8 L1092.0 489.9 L1091.0 490.3 L1090.0 490.2 L1089.0 491.8 L1088.0 493.1 L1087.0 494.7 L1086.0 496.6 L1085.0 498.0 L1084.0 499.5 L1083.0 501.1 L1082.0 499.8 L1081.0 499.4 L1080.0 498.4 L1079.0 497.2 L1078.0 496.7 L1077.0 495.6 L1076.0 495.0 L1075.0 493.7 L1074.0 492.9 L1073.0 491.8 L1072.0 491.3 L1071.0 490.4 L1070.0 489.5 L1069.0 489.7 L1068.0 490.0 L1067.0 490.3 L1066.0 490.3 L1065.0 490.5 L1064.0 490.9 L1063.0 491.0 L1062.0 491.6 L1061.0 491.3 L1060.0 491.6 L1059.0 491.9 L1058.0 491.9 L1057.0 493.4 L1056.0 494.2 L1055.0 495.4 L1054.0 496.9 L1053.0 497.6 L1052.0 498.7 L1051.0 500.2 L1050.0 498.7 L1049.0 498.1 L1048.0 496.8 L1047.0 495.7 L1046.0 495.2 L1045.0 494.1 L1044.0 493.9 L1043.0 494.0 L1042.0 494.4 L1041.0 494.4 L1040.0 494.6 L1039.0 494.8 L1038.0 494.8 L1037.0 495.1 L1036.0 495.3 L1035.0 495.5 L1034.0 495.2 L1033.0 495.5 L1032.0 495.4 L1031.0 496.0 L1030.0 496.9 L1029.0 497.3 L1028.0 498.0 L1027.0 498.4 L1026.0 499.4 L1025.0 500.0 L1024.0 500.4 L1023.0 500.9 L1022.0 499.7 L1021.0 498.5 L1020.0 496.8 L1019.0 495.7 L1018.0 494.1 L1017.0 492.7 L1016.0 491.9 L1015.0 490.4 L1014.0 490.4 L1013.0 490.5 L1012.0 490.6 L1011.0 490.7 L1010.0 490.8 L1009.0 490.6 L1008.0 490.8 L1007.0 490.6 L1006.0 490.9 L1005.0 490.7 L1004.0 490.9 L1003.0 491.0 L1002.0 491.1 L1001.0 491.1 L1000.0 491.3 L999.0 491.1 L998.0 491.4 L997.0 493.2 L996.0 495.8 L995.0 498.0 L994.0 499.5 L993.0 501.9 L992.0 500.6 L991.0 499.1 L990.0 497.6 L989.0 495.9 L988.0 494.7 L987.0 492.9 L986.0 491.5 L985.0 490.2 L984.0 490.2 L983.0 490.0 L982.0 490.1 L981.0 489.9 L980.0 489.7 L979.0 489.8 L978.0 489.9 L977.0 489.6 L976.0 489.5 L975.0 489.5 L974.0 489.6 L973.0 489.6 L972.0 489.2 L971.0 489.4 L970.0 489.4 L969.0 489.1 L968.0 489.1 L967.0 491.1 L966.0 492.4 L965.0 494.3 L964.0 495.6 L963.0 497.5 L962.0 499.2 L961.0 501.0 L960.0 498.7 L959.0 496.9 L958.0 494.9 L957.0 492.9 L956.0 490.5 L955.0 488.3 L954.0 488.7 L953.0 488.9 L952.0 489.1 L951.0 489.3 L950.0 489.6 L949.0 490.0 L948.0 489.9 L947.0 490.1 L946.0 490.5 L945.0 490.8 L944.0 490.9 L943.0 491.2 L942.0 491.3 L941.0 491.7 L940.0 491.7 L939.0 492.1 L938.0 492.3 L937.0 492.1 L936.0 492.3 L935.0 492.5 L934.0 492.9 L933.0 493.2 L932.0 493.3 L931.0 493.4 L930.0 493.6 L929.0 493.9 L928.0 493.7 L927.0 494.1 L926.0 494.4 L925.0 494.7 L924.0 494.6 L923.0 494.8 L922.0 495.2 L921.0 495.2 L920.0 495.4 L919.0 495.6 L918.0 495.9 L917.0 496.0 L916.0 496.0 L915.0 495.6 L914.0 495.8 L913.0 495.3 L912.0 495.7 L911.0 495.3 L910.0 495.4 L909.0 495.2 L908.0 495.6 L907.0 495.6 L906.0 495.9 L905.0 496.5 L904.0 496.7 L903.0 497.0 L902.0 497.2 L901.0 496.8 L900.0 496.6 L899.0 496.3 L898.0 495.9 L897.0 496.2 L896.0 495.5 L895.0 495.6 L894.0 495.6 L893.0 495.3 L892.0 495.4 L891.0 495.2 L890.0 494.8 L889.0 495.0 L888.0 495.5 L887.0 495.1 L886.0 495.6 L885.0 495.4 L884.0 495.6 L883.0 495.3 L882.0 495.6 L881.0 495.6 L880.0 495.8 L879.0 496.0 L878.0 495.9 L877.0 496.3 L876.0 496.7 L875.0 496.7 L874.0 497.1 L873.0 497.6 L872.0 497.6 L871.0 496.9 L870.0 496.7 L869.0 496.0 L868.0 495.2 L867.0 495.1 L866.0 494.5 L865.0 493.8 L864.0 493.2 L863.0 492.9 L862.0 492.7 L861.0 491.9 L860.0 491.5 L859.0 491.2 L858.0 490.9 L857.0 491.4 L856.0 491.6 L855.0 491.8 L854.0 491.6 L853.0 491.9 L852.0 492.7 L851.0 492.8 L850.0 492.8 L849.0 493.4 L848.0 493.5 L847.0 494.4 L846.0 495.5 L845.0 496.4 L844.0 497.2 L843.0 498.3 L842.0 498.9 L841.0 499.8 L840.0 501.1 L839.0 500.1 L838.0 499.3 L837.0 498.3 L836.0 497.0 L835.0 496.1 L834.0 495.5 L833.0 494.3 L832.0 493.7 L831.0 493.5 L830.0 493.9 L829.0 494.0 L828.0 493.8 L827.0 493.9 L826.0 494.1 L825.0 494.5 L824.0 494.5 L823.0 494.7 L822.0 494.9 L821.0 495.0 L820.0 495.0 L819.0 495.7 L818.0 495.7 L817.0 496.1 L816.0 496.2 L815.0 496.4 L814.0 496.7 L813.0 497.0 L812.0 497.8 L811.0 497.6 L810.0 498.3 L809.0 498.2 L808.0 498.6 L807.0 498.0 L806.0 497.2 L805.0 496.3 L804.0 495.7 L803.0 494.8 L802.0 494.0 L801.0 493.2 L800.0 492.4 L799.0 492.9 L798.0 493.3 L797.0 493.1 L796.0 493.7 L795.0 493.6 L794.0 494.0 L793.0 494.1 L792.0 494.9 L791.0 494.8 L790.0 495.2 L789.0 495.6 L788.0 495.5 L787.0 495.7 L786.0 496.1 L785.0 496.5 L784.0 496.3 L783.0 496.6 L782.0 497.1 L781.0 497.4 L780.0 497.6 L779.0 496.2 L778.0 495.0 L777.0 493.9 L776.0 493.1 L775.0 491.5 L774.0 492.0 L773.0 492.4 L772.0 492.6 L771.0 492.6 L770.0 493.2 L769.0 493.6 L768.0 493.9 L767.0 494.1 L766.0 494.0 L765.0 494.2 L764.0 494.8 L763.0 495.2 L762.0 495.5 L761.0 495.5 L760.0 496.0 L759.0 496.3 L758.0 496.2 L757.0 497.0 L756.0 497.5 L755.0 498.7 L754.0 499.1 L753.0 500.2 L752.0 500.9 L751.0 501.9 L750.0 502.5 L749.0 500.2 L748.0 498.3 L747.0 495.9 L746.0 493.7 L745.0 491.3 L744.0 491.3 L743.0 491.1 L742.0 491.5 L741.0 491.2 L740.0 491.1 L739.0 491.1 L738.0 491.2 L737.0 490.9 L736.0 490.9 L735.0 491.1 L734.0 491.2 L733.0 492.2 L732.0 492.6 L731.0 493.2 L730.0 493.4 L729.0 494.5 L728.0 494.6 L727.0 495.6 L726.0 495.7 L725.0 496.6 L724.0 497.2 L723.0 497.6 L722.0 497.0 L721.0 496.2 L720.0 495.4 L719.0 494.4 L718.0 493.3 L717.0 492.6 L716.0 491.8 L715.0 490.7 L714.0 490.0 L713.0 489.1 L712.0 488.4 L711.0 488.5 L710.0 488.7 L709.0 489.2 L708.0 489.3 L707.0 489.5 L706.0 489.5 L705.0 489.8 L704.0 490.1 L703.0 490.2 L702.0 490.4 L701.0 490.6 L700.0 491.3 L699.0 491.5 L698.0 491.4 L697.0 491.7 L696.0 493.4 L695.0 494.7 L694.0 496.5 L693.0 498.1 L692.0 499.2 L691.0 501.2 L690.0 499.3 L689.0 497.6 L688.0 496.1 L687.0 494.0 L686.0 492.6 L685.0 490.8 L684.0 490.9 L683.0 490.8 L682.0 490.9 L681.0 490.8 L680.0 491.0 L679.0 491.3 L678.0 491.3 L677.0 491.1 L676.0 491.5 L675.0 491.3 L674.0 491.1 L673.0 491.4 L672.0 491.3 L671.0 491.2 L670.0 491.7 L669.0 491.3 L668.0 491.6 L667.0 491.7 L666.0 491.9 L665.0 491.5 L664.0 493.4 L663.0 495.4 L662.0 497.5 L661.0 499.1 L660.0 501.0 L659.0 498.3 L658.0 495.1 L657.0 492.5 L656.0 489.4 L655.0 486.7 L654.0 487.0 L653.0 487.4 L652.0 487.7 L651.0 488.1 L650.0 488.4 L649.0 488.6 L648.0 488.9 L647.0 489.1 L646.0 489.4 L645.0 489.6 L644.0 489.9 L643.0 489.9 L642.0 490.0 L641.0 490.6 L640.0 490.8 L639.0 490.8 L638.0 491.3 L637.0 491.5 L636.0 491.3 L635.0 491.7 L634.0 492.9 L633.0 493.4 L632.0 494.5 L631.0 495.5 L630.0 496.4 L629.0 497.4 L628.0 498.1 L627.0 497.4 L626.0 495.9 L625.0 494.4 L624.0 493.6 L623.0 491.9 L622.0 491.1 L621.0 491.3 L620.0 491.8 L619.0 492.0 L618.0 492.5 L617.0 492.5 L616.0 493.3 L615.0 493.5 L614.0 493.6 L613.0 494.0 L612.0 494.3 L611.0 494.5 L610.0 495.3 L609.0 495.3 L608.0 495.5 L607.0 495.5 L606.0 495.8 L605.0 496.2 L604.0 495.0 L603.0 494.7 L602.0 494.2 L601.0 493.4 L600.0 492.9 L599.0 492.2 L598.0 491.8 L597.0 491.3 L596.0 490.9 L595.0 490.1 L594.0 489.5 L593.0 489.0 L592.0 488.3 L591.0 488.5 L590.0 488.8 L589.0 488.8 L588.0 489.1 L587.0 489.1 L586.0 489.4 L585.0 489.3 L584.0 489.5 L583.0 489.8 L582.0 490.0 L581.0 489.8 L580.0 490.1 L579.0 491.4 L578.0 492.7 L577.0 493.4 L576.0 495.2 L575.0 496.2 L574.0 497.3 L573.0 498.3 L572.0 499.5 L571.0 500.9 L570.0 502.1 L569.0 500.0 L568.0 498.3 L567.0 496.6 L566.0 495.4 L565.0 494.6 L564.0 493.5 L563.0 492.6 L562.0 491.4 L561.0 490.2 L560.0 489.3 L559.0 489.5 L558.0 489.6 L557.0 489.9 L556.0 490.1 L555.0 490.3 L554.0 490.4 L553.0 490.3 L552.0 490.7 L551.0 490.9 L550.0 491.4 L549.0 491.4 L548.0 491.5 L547.0 492.0 L546.0 494.8 L545.0 497.6 L544.0 501.0 L543.0 503.8 L542.0 500.3 L541.0 497.0 L540.0 493.8 L539.0 492.6 L538.0 491.0 L537.0 489.8 L536.0 488.4 L535.0 488.8 L534.0 489.0 L533.0 489.3 L532.0 489.4 L531.0 489.6 L530.0 489.9 L529.0 490.2 L528.0 490.6 L527.0 491.1 L526.0 491.0 L525.0 491.1 L524.0 491.7 L523.0 491.8 L522.0 492.1 L521.0 492.6 L520.0 492.9 L519.0 493.8 L518.0 494.9 L517.0 496.0 L516.0 496.8 L515.0 498.0 L514.0 498.9 L513.0 499.8 L512.0 500.8 L511.0 499.6 L510.0 497.9 L509.0 496.8 L508.0 494.0 L507.0 491.8 L506.0 489.3 L505.0 490.2 L504.0 490.6 L503.0 491.3 L502.0 491.8 L501.0 492.8 L500.0 493.5 L499.0 493.7 L498.0 494.1 L497.0 494.2 L496.0 494.4 L495.0 494.2 L494.0 494.8 L493.0 494.6 L492.0 494.7 L491.0 494.9 L490.0 495.6 L489.0 495.7 L488.0 495.9 L487.0 496.4 L486.0 497.2 L485.0 498.0 L484.0 498.5 L483.0 499.4 L482.0 500.3 L481.0 501.0 L480.0 499.2 L479.0 498.1 L478.0 496.8 L477.0 495.3 L476.0 493.2 L475.0 491.7 L474.0 489.7 L473.0 487.8 L472.0 488.1 L471.0 488.7 L470.0 488.8 L469.0 489.4 L468.0 489.8 L467.0 490.0 L466.0 489.9 L465.0 489.5 L464.0 489.3 L463.0 489.0 L462.0 488.8 L461.0 490.0 L460.0 491.3 L459.0 492.7 L458.0 493.5 L457.0 495.6 L456.0 497.5 L455.0 499.6 L454.0 501.6 L453.0 503.8 L452.0 499.5 L451.0 495.6 L450.0 492.0 L449.0 490.9 L448.0 489.8 L447.0 488.8 L446.0 488.9 L445.0 488.8 L444.0 489.0 L443.0 489.0 L442.0 489.0 L441.0 489.1 L440.0 489.3 L439.0 489.3 L438.0 489.4 L437.0 489.5 L436.0 489.6 L435.0 489.8 L434.0 490.0 L433.0 489.9 L432.0 489.9 L431.0 489.9 L430.0 490.1 L429.0 490.4 L428.0 490.5 L427.0 491.1 L426.0 491.4 L425.0 491.6 L424.0 491.9 L423.0 491.4Z" fill="#984843"/></svg><div style="position:absolute;left:4px;top:6px;width:73px;height:23.5px;border-radius:11px;background:#d7625c;opacity:.85"></div></div><div style="position:absolute;left:433.30px;top:437.15px;font-size:16.60px;line-height:16.60px;font-weight:400;color:rgba(255,255,255,0.9);white-space:nowrap;transform:scaleX(0.9047);transform-origin:0 0;-webkit-text-stroke:0.15px rgba(255,255,255,0.9);">Bass.wav</div><div style="position:absolute;left:423px;top:546px;width:790px;height:112px;background:#6aa7d8;border-radius:6px;overflow:hidden"><svg style="position:absolute;left:-423px;top:-546px" width="1213" height="675"><path d="M423.0 599.7 L424.0 599.7 L425.0 599.7 L426.0 599.7 L427.0 599.7 L428.0 599.7 L429.0 600.1 L430.0 600.5 L431.0 600.5 L432.0 600.5 L433.0 600.5 L434.0 600.5 L435.0 600.5 L436.0 600.5 L437.0 600.5 L438.0 600.5 L439.0 600.5 L440.0 600.5 L441.0 600.5 L442.0 600.5 L443.0 600.5 L444.0 600.5 L445.0 600.5 L446.0 599.6 L447.0 598.6 L448.0 597.6 L449.0 596.7 L450.0 597.1 L451.0 597.5 L452.0 598.0 L453.0 598.4 L454.0 598.8 L455.0 599.2 L456.0 599.7 L457.0 600.1 L458.0 600.5 L459.0 600.4 L460.0 600.3 L461.0 600.3 L462.0 600.2 L463.0 600.1 L464.0 600.0 L465.0 599.9 L466.0 599.9 L467.0 599.8 L468.0 599.7 L469.0 599.7 L470.0 599.7 L471.0 599.7 L472.0 599.7 L473.0 599.7 L474.0 599.7 L475.0 600.5 L476.0 599.7 L477.0 599.7 L478.0 599.7 L479.0 599.7 L480.0 599.7 L481.0 599.7 L482.0 599.7 L483.0 599.7 L484.0 599.7 L485.0 599.7 L486.0 599.7 L487.0 600.1 L488.0 600.5 L489.0 600.4 L490.0 600.4 L491.0 600.3 L492.0 600.2 L493.0 600.2 L494.0 600.1 L495.0 598.9 L496.0 597.7 L497.0 596.5 L498.0 595.4 L499.0 594.2 L500.0 594.5 L501.0 595.1 L502.0 595.4 L503.0 595.9 L504.0 596.1 L505.0 596.6 L506.0 596.9 L507.0 597.3 L508.0 597.7 L509.0 598.1 L510.0 598.5 L511.0 598.9 L512.0 599.3 L513.0 599.4 L514.0 599.4 L515.0 599.5 L516.0 599.5 L517.0 599.6 L518.0 599.6 L519.0 599.7 L520.0 599.7 L521.0 600.1 L522.0 600.5 L523.0 600.5 L524.0 600.5 L525.0 600.5 L526.0 600.5 L527.0 600.5 L528.0 600.5 L529.0 600.5 L530.0 600.5 L531.0 600.5 L532.0 600.5 L533.0 600.5 L534.0 600.5 L535.0 600.5 L536.0 599.2 L537.0 598.0 L538.0 596.7 L539.0 596.9 L540.0 597.1 L541.0 597.3 L542.0 597.6 L543.0 597.8 L544.0 598.0 L545.0 598.2 L546.0 598.4 L547.0 598.6 L548.0 598.8 L549.0 599.1 L550.0 599.3 L551.0 599.5 L552.0 599.7 L553.0 599.9 L554.0 600.1 L555.0 600.3 L556.0 600.5 L557.0 600.5 L558.0 600.4 L559.0 600.4 L560.0 600.4 L561.0 600.3 L562.0 600.3 L563.0 600.3 L564.0 599.3 L565.0 598.4 L566.0 597.5 L567.0 596.6 L568.0 595.6 L569.0 596.1 L570.0 596.6 L571.0 597.1 L572.0 597.6 L573.0 598.1 L574.0 598.6 L575.0 599.1 L576.0 599.5 L577.0 600.0 L578.0 600.5 L579.0 600.3 L580.0 600.2 L581.0 600.0 L582.0 599.8 L583.0 599.6 L584.0 599.5 L585.0 599.3 L586.0 599.3 L587.0 599.3 L588.0 599.3 L589.0 599.3 L590.0 599.3 L591.0 599.3 L592.0 599.3 L593.0 599.3 L594.0 599.3 L595.0 599.3 L596.0 599.3 L597.0 599.3 L598.0 599.3 L599.0 599.3 L600.0 599.3 L601.0 599.3 L602.0 599.3 L603.0 599.3 L604.0 599.3 L605.0 599.3 L606.0 599.3 L607.0 599.9 L608.0 600.5 L609.0 600.5 L610.0 600.5 L611.0 600.5 L612.0 600.5 L613.0 600.5 L614.0 600.5 L615.0 600.5 L616.0 600.5 L617.0 600.5 L618.0 600.5 L619.0 600.5 L620.0 600.5 L621.0 600.5 L622.0 600.5 L623.0 600.5 L624.0 600.5 L625.0 598.1 L626.0 595.6 L627.0 593.1 L628.0 590.5 L629.0 591.5 L630.0 592.9 L631.0 593.7 L632.0 594.9 L633.0 595.8 L634.0 596.9 L635.0 597.9 L636.0 598.9 L637.0 599.0 L638.0 599.0 L639.0 599.1 L640.0 599.1 L641.0 599.2 L642.0 599.2 L643.0 599.2 L644.0 599.3 L645.0 599.9 L646.0 600.5 L647.0 600.4 L648.0 600.2 L649.0 600.1 L650.0 600.0 L651.0 599.8 L652.0 599.7 L653.0 599.6 L654.0 599.4 L655.0 599.3 L656.0 599.0 L657.0 598.7 L658.0 598.3 L659.0 598.0 L660.0 597.7 L661.0 597.8 L662.0 598.0 L663.0 598.1 L664.0 598.2 L665.0 598.4 L666.0 598.5 L667.0 598.6 L668.0 598.8 L669.0 598.9 L670.0 599.0 L671.0 599.2 L672.0 599.3 L673.0 599.9 L674.0 600.5 L675.0 600.5 L676.0 600.5 L677.0 600.5 L678.0 600.5 L679.0 600.5 L680.0 600.5 L681.0 600.5 L682.0 600.5 L683.0 600.5 L684.0 599.7 L685.0 599.0 L686.0 598.2 L687.0 597.5 L688.0 596.7 L689.0 597.0 L690.0 597.2 L691.0 597.4 L692.0 597.7 L693.0 598.0 L694.0 598.2 L695.0 598.5 L696.0 598.7 L697.0 599.0 L698.0 599.2 L699.0 599.5 L700.0 599.7 L701.0 599.7 L702.0 599.6 L703.0 599.6 L704.0 599.5 L705.0 599.5 L706.0 599.4 L707.0 599.4 L708.0 599.3 L709.0 599.4 L710.0 599.5 L711.0 599.6 L712.0 599.7 L713.0 599.8 L714.0 599.9 L715.0 600.0 L716.0 600.1 L717.0 600.0 L718.0 599.9 L719.0 599.8 L720.0 599.7 L721.0 599.6 L722.0 599.5 L723.0 599.4 L724.0 599.3 L725.0 599.4 L726.0 599.5 L727.0 599.6 L728.0 599.7 L729.0 599.7 L730.0 599.8 L731.0 599.9 L732.0 600.0 L733.0 600.1 L734.0 599.2 L735.0 598.4 L736.0 597.6 L737.0 596.7 L738.0 597.1 L739.0 597.4 L740.0 597.8 L741.0 598.2 L742.0 598.6 L743.0 598.9 L744.0 599.3 L745.0 598.8 L746.0 598.3 L747.0 597.8 L748.0 597.2 L749.0 596.7 L750.0 596.3 L751.0 596.7 L752.0 597.1 L753.0 597.5 L754.0 598.0 L755.0 598.4 L756.0 598.9 L757.0 599.3 L758.0 599.4 L759.0 599.5 L760.0 599.6 L761.0 599.7 L762.0 599.8 L763.0 599.9 L764.0 600.0 L765.0 600.1 L766.0 599.1 L767.0 598.1 L768.0 597.0 L769.0 596.0 L770.0 595.1 L771.0 595.6 L772.0 596.0 L773.0 596.7 L774.0 597.2 L775.0 597.7 L776.0 598.2 L777.0 598.8 L778.0 599.3 L779.0 599.3 L780.0 599.4 L781.0 599.4 L782.0 599.4 L783.0 599.5 L784.0 599.5 L785.0 599.5 L786.0 599.6 L787.0 599.6 L788.0 599.6 L789.0 599.7 L790.0 599.7 L791.0 599.6 L792.0 599.5 L793.0 599.4 L794.0 599.2 L795.0 599.1 L796.0 599.0 L797.0 598.9 L798.0 598.9 L799.0 598.9 L800.0 598.9 L801.0 598.9 L802.0 598.9 L803.0 598.9 L804.0 597.7 L805.0 593.8 L806.0 589.7 L807.0 585.6 L808.0 581.9 L809.0 583.1 L810.0 584.8 L811.0 586.2 L812.0 587.6 L813.0 588.6 L814.0 590.1 L815.0 591.6 L816.0 592.8 L817.0 594.2 L818.0 595.3 L819.0 596.5 L820.0 597.7 L821.0 598.5 L822.0 599.3 L823.0 599.2 L824.0 599.1 L825.0 598.9 L826.0 598.8 L827.0 598.7 L828.0 598.6 L829.0 598.4 L830.0 598.3 L831.0 598.2 L832.0 598.1 L833.0 597.9 L834.0 597.8 L835.0 597.7 L836.0 597.8 L837.0 597.9 L838.0 598.1 L839.0 598.2 L840.0 598.3 L841.0 598.4 L842.0 598.6 L843.0 598.7 L844.0 598.8 L845.0 598.9 L846.0 599.1 L847.0 599.2 L848.0 599.3 L849.0 600.5 L850.0 600.5 L851.0 600.5 L852.0 600.5 L853.0 600.5 L854.0 600.5 L855.0 600.5 L856.0 600.5 L857.0 600.5 L858.0 600.5 L859.0 600.5 L860.0 600.5 L861.0 600.5 L862.0 600.5 L863.0 600.5 L864.0 599.1 L865.0 597.8 L866.0 596.3 L867.0 595.0 L868.0 595.6 L869.0 596.1 L870.0 596.7 L871.0 597.2 L872.0 597.7 L873.0 598.2 L874.0 598.8 L875.0 599.3 L876.0 599.3 L877.0 599.2 L878.0 599.2 L879.0 599.1 L880.0 599.1 L881.0 599.1 L882.0 599.0 L883.0 599.0 L884.0 598.9 L885.0 598.9 L886.0 599.0 L887.0 599.1 L888.0 599.3 L889.0 599.4 L890.0 599.5 L891.0 599.6 L892.0 599.7 L893.0 599.9 L894.0 600.0 L895.0 600.1 L896.0 598.6 L897.0 597.2 L898.0 595.8 L899.0 596.5 L900.0 597.2 L901.0 597.9 L902.0 598.6 L903.0 599.3 L904.0 599.3 L905.0 599.3 L906.0 599.3 L907.0 599.3 L908.0 599.3 L909.0 599.3 L910.0 599.3 L911.0 599.3 L912.0 599.3 L913.0 598.1 L914.0 596.9 L915.0 595.7 L916.0 594.6 L917.0 593.6 L918.0 594.2 L919.0 594.8 L920.0 595.5 L921.0 596.0 L922.0 596.7 L923.0 593.8 L924.0 591.2 L925.0 588.3 L926.0 585.5 L927.0 586.6 L928.0 588.0 L929.0 589.1 L930.0 590.1 L931.0 591.0 L932.0 591.8 L933.0 593.0 L934.0 594.2 L935.0 595.2 L936.0 595.4 L937.0 595.7 L938.0 596.0 L939.0 596.3 L940.0 596.4 L941.0 596.7 L942.0 597.0 L943.0 597.2 L944.0 597.4 L945.0 597.7 L946.0 598.2 L947.0 598.7 L948.0 599.1 L949.0 599.6 L950.0 600.1 L951.0 599.9 L952.0 599.8 L953.0 599.6 L954.0 599.5 L955.0 599.3 L956.0 593.7 L957.0 588.5 L958.0 589.1 L959.0 590.2 L960.0 591.1 L961.0 592.2 L962.0 593.1 L963.0 593.9 L964.0 594.8 L965.0 595.8 L966.0 596.7 L967.0 597.7 L968.0 598.1 L969.0 598.5 L970.0 598.9 L971.0 599.3 L972.0 599.7 L973.0 599.7 L974.0 599.6 L975.0 599.6 L976.0 599.6 L977.0 599.5 L978.0 599.5 L979.0 599.5 L980.0 599.5 L981.0 599.4 L982.0 599.4 L983.0 599.4 L984.0 599.3 L985.0 599.3 L986.0 599.3 L987.0 599.3 L988.0 599.3 L989.0 599.3 L990.0 599.3 L991.0 599.3 L992.0 599.3 L993.0 599.3 L994.0 599.3 L995.0 599.3 L996.0 599.3 L997.0 599.3 L998.0 599.3 L999.0 599.3 L1000.0 599.3 L1001.0 599.3 L1002.0 599.3 L1003.0 599.9 L1004.0 600.5 L1005.0 600.5 L1006.0 600.5 L1007.0 600.5 L1008.0 600.5 L1009.0 600.5 L1010.0 600.5 L1011.0 600.5 L1012.0 600.5 L1013.0 600.5 L1014.0 600.5 L1015.0 600.5 L1016.0 598.9 L1017.0 597.4 L1018.0 595.9 L1019.0 594.3 L1020.0 592.8 L1021.0 593.7 L1022.0 594.8 L1023.0 596.0 L1024.0 597.1 L1025.0 598.2 L1026.0 599.3 L1027.0 599.5 L1028.0 599.6 L1029.0 599.8 L1030.0 600.0 L1031.0 600.2 L1032.0 600.3 L1033.0 600.5 L1034.0 600.5 L1035.0 600.5 L1036.0 600.5 L1037.0 600.5 L1038.0 600.5 L1039.0 600.5 L1040.0 600.5 L1041.0 600.5 L1042.0 600.5 L1043.0 599.4 L1044.0 598.4 L1045.0 597.3 L1046.0 596.3 L1047.0 595.2 L1048.0 595.7 L1049.0 596.4 L1050.0 596.9 L1051.0 597.4 L1052.0 597.9 L1053.0 598.5 L1054.0 599.0 L1055.0 599.6 L1056.0 600.1 L1057.0 600.0 L1058.0 600.0 L1059.0 599.9 L1060.0 599.8 L1061.0 599.7 L1062.0 599.7 L1063.0 599.6 L1064.0 599.5 L1065.0 599.4 L1066.0 599.4 L1067.0 599.3 L1068.0 599.3 L1069.0 599.3 L1070.0 599.3 L1071.0 599.3 L1072.0 599.3 L1073.0 599.3 L1074.0 599.3 L1075.0 599.3 L1076.0 599.3 L1077.0 599.3 L1078.0 599.3 L1079.0 599.3 L1080.0 599.3 L1081.0 599.3 L1082.0 599.3 L1083.0 599.3 L1084.0 599.3 L1085.0 599.3 L1086.0 599.9 L1087.0 600.5 L1088.0 600.5 L1089.0 600.5 L1090.0 600.5 L1091.0 600.5 L1092.0 600.5 L1093.0 600.5 L1094.0 600.5 L1095.0 600.5 L1096.0 600.5 L1097.0 600.5 L1098.0 600.5 L1099.0 600.5 L1100.0 600.5 L1101.0 600.5 L1102.0 599.7 L1103.0 599.0 L1104.0 598.2 L1105.0 597.5 L1106.0 596.8 L1107.0 595.9 L1108.0 595.3 L1109.0 594.5 L1110.0 593.5 L1111.0 594.3 L1112.0 594.8 L1113.0 595.5 L1114.0 595.9 L1115.0 596.5 L1116.0 597.1 L1117.0 597.6 L1118.0 598.2 L1119.0 598.7 L1120.0 599.3 L1121.0 599.3 L1122.0 599.2 L1123.0 599.2 L1124.0 599.1 L1125.0 599.1 L1126.0 599.1 L1127.0 599.0 L1128.0 599.0 L1129.0 598.9 L1130.0 598.9 L1131.0 598.9 L1132.0 598.9 L1133.0 599.0 L1134.0 599.0 L1135.0 599.0 L1136.0 599.0 L1137.0 599.1 L1138.0 599.1 L1139.0 599.1 L1140.0 599.1 L1141.0 599.1 L1142.0 599.2 L1143.0 599.2 L1144.0 599.2 L1145.0 599.2 L1146.0 599.3 L1147.0 599.3 L1148.0 599.3 L1149.0 599.9 L1150.0 600.5 L1151.0 600.5 L1152.0 600.5 L1153.0 600.5 L1154.0 600.5 L1155.0 600.5 L1156.0 600.5 L1157.0 600.5 L1158.0 600.5 L1159.0 600.5 L1160.0 600.5 L1161.0 600.5 L1162.0 600.5 L1163.0 600.5 L1164.0 600.5 L1165.0 599.3 L1166.0 598.1 L1167.0 596.8 L1168.0 595.5 L1169.0 594.4 L1170.0 595.0 L1171.0 595.7 L1172.0 596.3 L1173.0 596.9 L1174.0 597.6 L1175.0 598.2 L1176.0 598.8 L1177.0 599.5 L1178.0 600.1 L1179.0 600.1 L1180.0 600.2 L1181.0 600.2 L1182.0 600.2 L1183.0 600.2 L1184.0 600.2 L1185.0 600.3 L1186.0 600.3 L1187.0 600.3 L1188.0 600.4 L1189.0 600.4 L1190.0 600.4 L1191.0 600.4 L1192.0 600.5 L1193.0 600.5 L1194.0 600.5 L1195.0 599.5 L1196.0 598.6 L1197.0 597.6 L1198.0 596.6 L1199.0 595.6 L1200.0 594.7 L1200.0 608.8 L1199.0 607.7 L1198.0 606.7 L1197.0 605.8 L1196.0 604.8 L1195.0 603.9 L1194.0 602.9 L1193.0 602.9 L1192.0 603.0 L1191.0 603.0 L1190.0 603.0 L1189.0 603.0 L1188.0 603.1 L1187.0 603.1 L1186.0 603.1 L1185.0 603.1 L1184.0 603.2 L1183.0 603.2 L1182.0 603.2 L1181.0 603.2 L1180.0 603.2 L1179.0 603.3 L1178.0 603.3 L1177.0 603.9 L1176.0 604.6 L1175.0 605.2 L1174.0 605.8 L1173.0 606.5 L1172.0 607.1 L1171.0 607.7 L1170.0 608.3 L1169.0 608.9 L1168.0 607.8 L1167.0 606.6 L1166.0 605.3 L1165.0 604.1 L1164.0 602.9 L1163.0 602.9 L1162.0 602.9 L1161.0 602.9 L1160.0 602.9 L1159.0 602.9 L1158.0 602.9 L1157.0 602.9 L1156.0 602.9 L1155.0 602.9 L1154.0 602.9 L1153.0 602.9 L1152.0 602.9 L1151.0 602.9 L1150.0 602.9 L1149.0 603.5 L1148.0 604.1 L1147.0 604.1 L1146.0 604.1 L1145.0 604.2 L1144.0 604.2 L1143.0 604.2 L1142.0 604.2 L1141.0 604.3 L1140.0 604.3 L1139.0 604.3 L1138.0 604.3 L1137.0 604.3 L1136.0 604.4 L1135.0 604.4 L1134.0 604.4 L1133.0 604.4 L1132.0 604.5 L1131.0 604.5 L1130.0 604.5 L1129.0 604.5 L1128.0 604.4 L1127.0 604.4 L1126.0 604.3 L1125.0 604.3 L1124.0 604.3 L1123.0 604.2 L1122.0 604.2 L1121.0 604.1 L1120.0 604.1 L1119.0 604.7 L1118.0 605.2 L1117.0 605.8 L1116.0 606.4 L1115.0 606.9 L1114.0 607.5 L1113.0 608.1 L1112.0 608.5 L1111.0 609.2 L1110.0 609.8 L1109.0 608.9 L1108.0 608.3 L1107.0 607.5 L1106.0 606.6 L1105.0 605.9 L1104.0 605.2 L1103.0 604.4 L1102.0 603.7 L1101.0 602.9 L1100.0 602.9 L1099.0 602.9 L1098.0 602.9 L1097.0 602.9 L1096.0 602.9 L1095.0 602.9 L1094.0 602.9 L1093.0 602.9 L1092.0 602.9 L1091.0 602.9 L1090.0 602.9 L1089.0 602.9 L1088.0 602.9 L1087.0 602.9 L1086.0 603.5 L1085.0 604.1 L1084.0 604.1 L1083.0 604.1 L1082.0 604.1 L1081.0 604.1 L1080.0 604.1 L1079.0 604.1 L1078.0 604.1 L1077.0 604.1 L1076.0 604.1 L1075.0 604.1 L1074.0 604.1 L1073.0 604.1 L1072.0 604.1 L1071.0 604.1 L1070.0 604.1 L1069.0 604.1 L1068.0 604.1 L1067.0 604.1 L1066.0 604.0 L1065.0 604.0 L1064.0 603.9 L1063.0 603.8 L1062.0 603.7 L1061.0 603.7 L1060.0 603.6 L1059.0 603.5 L1058.0 603.4 L1057.0 603.4 L1056.0 603.3 L1055.0 603.8 L1054.0 604.4 L1053.0 604.9 L1052.0 605.5 L1051.0 606.0 L1050.0 606.5 L1049.0 607.1 L1048.0 607.6 L1047.0 608.2 L1046.0 607.2 L1045.0 606.1 L1044.0 605.0 L1043.0 604.0 L1042.0 602.9 L1041.0 602.9 L1040.0 602.9 L1039.0 602.9 L1038.0 602.9 L1037.0 602.9 L1036.0 602.9 L1035.0 602.9 L1034.0 602.9 L1033.0 602.9 L1032.0 603.1 L1031.0 603.2 L1030.0 603.4 L1029.0 603.6 L1028.0 603.8 L1027.0 603.9 L1026.0 604.1 L1025.0 605.2 L1024.0 606.3 L1023.0 607.4 L1022.0 608.4 L1021.0 609.5 L1020.0 610.9 L1019.0 609.3 L1018.0 607.7 L1017.0 606.0 L1016.0 604.5 L1015.0 602.9 L1014.0 602.9 L1013.0 602.9 L1012.0 602.9 L1011.0 602.9 L1010.0 602.9 L1009.0 602.9 L1008.0 602.9 L1007.0 602.9 L1006.0 602.9 L1005.0 602.9 L1004.0 602.9 L1003.0 603.5 L1002.0 604.1 L1001.0 604.1 L1000.0 604.1 L999.0 604.1 L998.0 604.1 L997.0 604.1 L996.0 604.1 L995.0 604.1 L994.0 604.1 L993.0 604.1 L992.0 604.1 L991.0 604.1 L990.0 604.1 L989.0 604.1 L988.0 604.1 L987.0 604.1 L986.0 604.1 L985.0 604.1 L984.0 604.1 L983.0 604.0 L982.0 604.0 L981.0 604.0 L980.0 603.9 L979.0 603.9 L978.0 603.9 L977.0 603.9 L976.0 603.8 L975.0 603.8 L974.0 603.8 L973.0 603.7 L972.0 603.7 L971.0 604.1 L970.0 604.5 L969.0 604.9 L968.0 605.3 L967.0 605.7 L966.0 606.6 L965.0 607.6 L964.0 608.5 L963.0 609.4 L962.0 610.4 L961.0 611.1 L960.0 612.3 L959.0 613.4 L958.0 614.0 L957.0 615.3 L956.0 609.4 L955.0 604.1 L954.0 603.9 L953.0 603.8 L952.0 603.6 L951.0 603.5 L950.0 603.3 L949.0 603.8 L948.0 604.3 L947.0 604.7 L946.0 605.2 L945.0 605.7 L944.0 605.9 L943.0 606.2 L942.0 606.4 L941.0 606.7 L940.0 606.9 L939.0 607.2 L938.0 607.5 L937.0 607.7 L936.0 607.9 L935.0 608.3 L934.0 609.1 L933.0 610.3 L932.0 611.3 L931.0 612.6 L930.0 613.7 L929.0 614.6 L928.0 615.6 L927.0 616.4 L926.0 617.5 L925.0 615.2 L924.0 612.2 L923.0 609.5 L922.0 606.7 L921.0 607.4 L920.0 608.0 L919.0 608.7 L918.0 609.2 L917.0 610.1 L916.0 608.7 L915.0 607.6 L914.0 606.4 L913.0 605.3 L912.0 604.1 L911.0 604.1 L910.0 604.1 L909.0 604.1 L908.0 604.1 L907.0 604.1 L906.0 604.1 L905.0 604.1 L904.0 604.1 L903.0 604.1 L902.0 604.8 L901.0 605.5 L900.0 606.3 L899.0 606.9 L898.0 607.6 L897.0 606.3 L896.0 604.8 L895.0 603.3 L894.0 603.4 L893.0 603.5 L892.0 603.7 L891.0 603.8 L890.0 603.9 L889.0 604.0 L888.0 604.1 L887.0 604.3 L886.0 604.4 L885.0 604.5 L884.0 604.5 L883.0 604.4 L882.0 604.4 L881.0 604.3 L880.0 604.3 L879.0 604.3 L878.0 604.2 L877.0 604.2 L876.0 604.1 L875.0 604.1 L874.0 604.6 L873.0 605.2 L872.0 605.7 L871.0 606.3 L870.0 606.8 L869.0 607.4 L868.0 607.8 L867.0 608.4 L866.0 607.0 L865.0 605.7 L864.0 604.3 L863.0 602.9 L862.0 602.9 L861.0 602.9 L860.0 602.9 L859.0 602.9 L858.0 602.9 L857.0 602.9 L856.0 602.9 L855.0 602.9 L854.0 602.9 L853.0 602.9 L852.0 602.9 L851.0 602.9 L850.0 602.9 L849.0 602.9 L848.0 604.1 L847.0 604.2 L846.0 604.3 L845.0 604.5 L844.0 604.6 L843.0 604.7 L842.0 604.8 L841.0 605.0 L840.0 605.1 L839.0 605.2 L838.0 605.3 L837.0 605.5 L836.0 605.6 L835.0 605.7 L834.0 605.6 L833.0 605.5 L832.0 605.3 L831.0 605.2 L830.0 605.1 L829.0 605.0 L828.0 604.8 L827.0 604.7 L826.0 604.6 L825.0 604.5 L824.0 604.3 L823.0 604.2 L822.0 604.1 L821.0 604.9 L820.0 605.7 L819.0 606.9 L818.0 608.0 L817.0 609.3 L816.0 610.5 L815.0 612.0 L814.0 613.4 L813.0 614.8 L812.0 615.9 L811.0 617.6 L810.0 619.0 L809.0 620.1 L808.0 621.4 L807.0 617.6 L806.0 613.6 L805.0 609.9 L804.0 605.7 L803.0 604.5 L802.0 604.5 L801.0 604.5 L800.0 604.5 L799.0 604.5 L798.0 604.5 L797.0 604.5 L796.0 604.4 L795.0 604.3 L794.0 604.2 L793.0 604.0 L792.0 603.9 L791.0 603.8 L790.0 603.7 L789.0 603.7 L788.0 603.8 L787.0 603.8 L786.0 603.8 L785.0 603.9 L784.0 603.9 L783.0 603.9 L782.0 604.0 L781.0 604.0 L780.0 604.0 L779.0 604.1 L778.0 604.1 L777.0 604.6 L776.0 605.2 L775.0 605.7 L774.0 606.2 L773.0 606.8 L772.0 607.3 L771.0 607.9 L770.0 608.4 L769.0 607.5 L768.0 606.4 L767.0 605.3 L766.0 604.3 L765.0 603.3 L764.0 603.4 L763.0 603.5 L762.0 603.6 L761.0 603.7 L760.0 603.8 L759.0 603.9 L758.0 604.0 L757.0 604.1 L756.0 604.5 L755.0 605.0 L754.0 605.4 L753.0 605.9 L752.0 606.3 L751.0 606.8 L750.0 607.1 L749.0 606.7 L748.0 606.2 L747.0 605.7 L746.0 605.1 L745.0 604.6 L744.0 604.1 L743.0 604.5 L742.0 604.8 L741.0 605.2 L740.0 605.6 L739.0 606.0 L738.0 606.3 L737.0 606.7 L736.0 605.8 L735.0 605.0 L734.0 604.2 L733.0 603.3 L732.0 603.4 L731.0 603.5 L730.0 603.6 L729.0 603.7 L728.0 603.7 L727.0 603.8 L726.0 603.9 L725.0 604.0 L724.0 604.1 L723.0 604.0 L722.0 603.9 L721.0 603.8 L720.0 603.7 L719.0 603.6 L718.0 603.5 L717.0 603.4 L716.0 603.3 L715.0 603.4 L714.0 603.5 L713.0 603.6 L712.0 603.7 L711.0 603.8 L710.0 603.9 L709.0 604.0 L708.0 604.1 L707.0 604.1 L706.0 604.0 L705.0 604.0 L704.0 603.9 L703.0 603.9 L702.0 603.8 L701.0 603.8 L700.0 603.7 L699.0 604.0 L698.0 604.2 L697.0 604.5 L696.0 604.7 L695.0 605.0 L694.0 605.2 L693.0 605.5 L692.0 605.7 L691.0 606.0 L690.0 606.2 L689.0 606.4 L688.0 606.7 L687.0 605.9 L686.0 605.2 L685.0 604.4 L684.0 603.7 L683.0 602.9 L682.0 602.9 L681.0 602.9 L680.0 602.9 L679.0 602.9 L678.0 602.9 L677.0 602.9 L676.0 602.9 L675.0 602.9 L674.0 602.9 L673.0 603.5 L672.0 604.1 L671.0 604.2 L670.0 604.4 L669.0 604.5 L668.0 604.6 L667.0 604.8 L666.0 604.9 L665.0 605.0 L664.0 605.2 L663.0 605.3 L662.0 605.4 L661.0 605.6 L660.0 605.7 L659.0 605.4 L658.0 605.1 L657.0 604.7 L656.0 604.4 L655.0 604.1 L654.0 604.0 L653.0 603.8 L652.0 603.7 L651.0 603.6 L650.0 603.4 L649.0 603.3 L648.0 603.2 L647.0 603.0 L646.0 602.9 L645.0 603.5 L644.0 604.1 L643.0 604.2 L642.0 604.2 L641.0 604.2 L640.0 604.3 L639.0 604.4 L638.0 604.4 L637.0 604.5 L636.0 604.5 L635.0 605.5 L634.0 606.5 L633.0 607.5 L632.0 608.5 L631.0 609.6 L630.0 610.6 L629.0 611.7 L628.0 612.8 L627.0 610.1 L626.0 607.8 L625.0 605.4 L624.0 602.9 L623.0 602.9 L622.0 602.9 L621.0 602.9 L620.0 602.9 L619.0 602.9 L618.0 602.9 L617.0 602.9 L616.0 602.9 L615.0 602.9 L614.0 602.9 L613.0 602.9 L612.0 602.9 L611.0 602.9 L610.0 602.9 L609.0 602.9 L608.0 602.9 L607.0 603.5 L606.0 604.1 L605.0 604.1 L604.0 604.1 L603.0 604.1 L602.0 604.1 L601.0 604.1 L600.0 604.1 L599.0 604.1 L598.0 604.1 L597.0 604.1 L596.0 604.1 L595.0 604.1 L594.0 604.1 L593.0 604.1 L592.0 604.1 L591.0 604.1 L590.0 604.1 L589.0 604.1 L588.0 604.1 L587.0 604.1 L586.0 604.1 L585.0 604.1 L584.0 603.9 L583.0 603.8 L582.0 603.6 L581.0 603.4 L580.0 603.2 L579.0 603.1 L578.0 602.9 L577.0 603.4 L576.0 603.9 L575.0 604.3 L574.0 604.8 L573.0 605.3 L572.0 605.8 L571.0 606.3 L570.0 606.7 L569.0 607.3 L568.0 607.8 L567.0 606.8 L566.0 605.9 L565.0 605.0 L564.0 604.1 L563.0 603.1 L562.0 603.1 L561.0 603.1 L560.0 603.0 L559.0 603.0 L558.0 603.0 L557.0 602.9 L556.0 602.9 L555.0 603.1 L554.0 603.3 L553.0 603.5 L552.0 603.7 L551.0 603.9 L550.0 604.1 L549.0 604.3 L548.0 604.6 L547.0 604.8 L546.0 605.0 L545.0 605.2 L544.0 605.4 L543.0 605.6 L542.0 605.8 L541.0 606.0 L540.0 606.3 L539.0 606.5 L538.0 606.7 L537.0 605.4 L536.0 604.2 L535.0 602.9 L534.0 602.9 L533.0 602.9 L532.0 602.9 L531.0 602.9 L530.0 602.9 L529.0 602.9 L528.0 602.9 L527.0 602.9 L526.0 602.9 L525.0 602.9 L524.0 602.9 L523.0 602.9 L522.0 602.9 L521.0 603.3 L520.0 603.7 L519.0 603.8 L518.0 603.8 L517.0 603.9 L516.0 603.9 L515.0 604.0 L514.0 604.0 L513.0 604.1 L512.0 604.1 L511.0 604.5 L510.0 604.9 L509.0 605.3 L508.0 605.7 L507.0 606.1 L506.0 606.4 L505.0 606.9 L504.0 607.2 L503.0 607.7 L502.0 608.0 L501.0 608.3 L500.0 608.7 L499.0 609.1 L498.0 608.0 L497.0 606.8 L496.0 605.7 L495.0 604.5 L494.0 603.3 L493.0 603.2 L492.0 603.2 L491.0 603.1 L490.0 603.0 L489.0 603.0 L488.0 602.9 L487.0 603.3 L486.0 603.7 L485.0 603.7 L484.0 603.7 L483.0 603.7 L482.0 603.7 L481.0 603.7 L480.0 603.7 L479.0 603.7 L478.0 603.7 L477.0 603.7 L476.0 603.7 L475.0 602.9 L474.0 603.7 L473.0 603.7 L472.0 603.7 L471.0 603.7 L470.0 603.7 L469.0 603.7 L468.0 603.7 L467.0 603.6 L466.0 603.5 L465.0 603.5 L464.0 603.4 L463.0 603.3 L462.0 603.2 L461.0 603.1 L460.0 603.1 L459.0 603.0 L458.0 602.9 L457.0 603.3 L456.0 603.7 L455.0 604.2 L454.0 604.6 L453.0 605.0 L452.0 605.4 L451.0 605.9 L450.0 606.3 L449.0 606.7 L448.0 605.8 L447.0 604.8 L446.0 603.9 L445.0 602.9 L444.0 602.9 L443.0 602.9 L442.0 602.9 L441.0 602.9 L440.0 602.9 L439.0 602.9 L438.0 602.9 L437.0 602.9 L436.0 602.9 L435.0 602.9 L434.0 602.9 L433.0 602.9 L432.0 602.9 L431.0 602.9 L430.0 602.9 L429.0 603.3 L428.0 603.7 L427.0 603.7 L426.0 603.7 L425.0 603.7 L424.0 603.7 L423.0 603.7Z" fill="#4a79a4"/></svg><div style="position:absolute;left:4px;top:6px;width:88px;height:23.5px;border-radius:11px;background:#649ccb;opacity:.85"></div></div><div style="position:absolute;left:433.27px;top:557.15px;font-size:16.60px;line-height:16.60px;font-weight:400;color:rgba(255,255,255,0.9);white-space:nowrap;transform:scaleX(0.9278);transform-origin:0 0;-webkit-text-stroke:0.15px rgba(255,255,255,0.9);">Drums.wav</div><div style="position:absolute;left:421px;top:160px;width:2px;height:515px;background:#ffffff;"></div><svg style="position:absolute;left:410px;top:150px" width="35" height="40" viewBox="410 150 35 40"><path d="M415.5 157.6 Q415.5 156.5 416.6 156.5 H432.6 Q437.2 156.5 435.2 160.6 L425.4 179.4 Q422 184 418.6 180.2 Q415.5 177.6 415.5 174.5 Z" fill="#fff"/></svg><svg style="position:absolute;left:0;top:660px" width="1200" height="15" viewBox="0 660 1200 15"><rect x="464" y="672" width="9" height="3" fill="#55575d"/><rect x="478.93" y="672" width="9" height="3" fill="#55575d"/><rect x="493.86" y="672" width="9" height="3" fill="#55575d"/><rect x="508.79" y="672" width="9" height="3" fill="#55575d"/><rect x="523.72" y="672" width="9" height="3" fill="#55575d"/><rect x="538.65" y="672" width="9" height="3" fill="#55575d"/><rect x="553.5799999999999" y="672" width="9" height="3" fill="#55575d"/><rect x="568.5099999999999" y="672" width="9" height="3" fill="#55575d"/><rect x="583.4399999999998" y="672" width="9" height="3" fill="#55575d"/><rect x="598.3699999999998" y="672" width="9" height="3" fill="#55575d"/><rect x="613.2999999999997" y="672" width="9" height="3" fill="#55575d"/><rect x="628.2299999999997" y="672" width="9" height="3" fill="#55575d"/><rect x="643.1599999999996" y="672" width="9" height="3" fill="#55575d"/><rect x="658.0899999999996" y="672" width="9" height="3" fill="#55575d"/><rect x="673.0199999999995" y="672" width="9" height="3" fill="#55575d"/><rect x="687.9499999999995" y="672" width="9" height="3" fill="#55575d"/><rect x="702.8799999999994" y="672" width="9" height="3" fill="#55575d"/><rect x="717.8099999999994" y="672" width="9" height="3" fill="#55575d"/><rect x="732.7399999999993" y="672" width="9" height="3" fill="#55575d"/><rect x="747.6699999999993" y="672" width="9" height="3" fill="#55575d"/><rect x="762.5999999999992" y="672" width="9" height="3" fill="#55575d"/><rect x="777.5299999999992" y="672" width="9" height="3" fill="#55575d"/><rect x="792.4599999999991" y="672" width="9" height="3" fill="#55575d"/><rect x="807.3899999999991" y="672" width="9" height="3" fill="#55575d"/><rect x="822.319999999999" y="672" width="9" height="3" fill="#55575d"/><rect x="837.249999999999" y="672" width="9" height="3" fill="#55575d"/><rect x="852.1799999999989" y="672" width="9" height="3" fill="#55575d"/><rect x="867.1099999999989" y="672" width="9" height="3" fill="#55575d"/><rect x="882.0399999999988" y="672" width="9" height="3" fill="#55575d"/><rect x="896.9699999999988" y="672" width="9" height="3" fill="#55575d"/><rect x="911.8999999999987" y="672" width="9" height="3" fill="#55575d"/><rect x="926.8299999999987" y="672" width="9" height="3" fill="#55575d"/><rect x="941.7599999999986" y="672" width="9" height="3" fill="#55575d"/><rect x="956.6899999999986" y="672" width="9" height="3" fill="#55575d"/><rect x="971.6199999999985" y="672" width="9" height="3" fill="#55575d"/><rect x="986.5499999999985" y="672" width="9" height="3" fill="#55575d"/><rect x="1001.4799999999984" y="672" width="9" height="3" fill="#55575d"/><rect x="1016.4099999999984" y="672" width="9" height="3" fill="#55575d"/><rect x="1031.3399999999983" y="672" width="9" height="3" fill="#55575d"/><rect x="1046.2699999999984" y="672" width="9" height="3" fill="#55575d"/><rect x="1061.1999999999985" y="672" width="9" height="3" fill="#55575d"/><rect x="1076.1299999999985" y="672" width="9" height="3" fill="#55575d"/><rect x="1091.0599999999986" y="672" width="9" height="3" fill="#55575d"/><rect x="1105.9899999999986" y="672" width="9" height="3" fill="#55575d"/><rect x="1120.9199999999987" y="672" width="9" height="3" fill="#55575d"/><rect x="1135.8499999999988" y="672" width="9" height="3" fill="#55575d"/><rect x="1150.7799999999988" y="672" width="9" height="3" fill="#55575d"/><rect x="1165.709999999999" y="672" width="9" height="3" fill="#55575d"/><rect x="1180.639999999999" y="672" width="9" height="3" fill="#55575d"/><rect x="1195.569999999999" y="672" width="9" height="3" fill="#55575d"/><path d="M457 675 L462 672 H464 V675 Z" fill="#55575d"/></svg></body></html>
